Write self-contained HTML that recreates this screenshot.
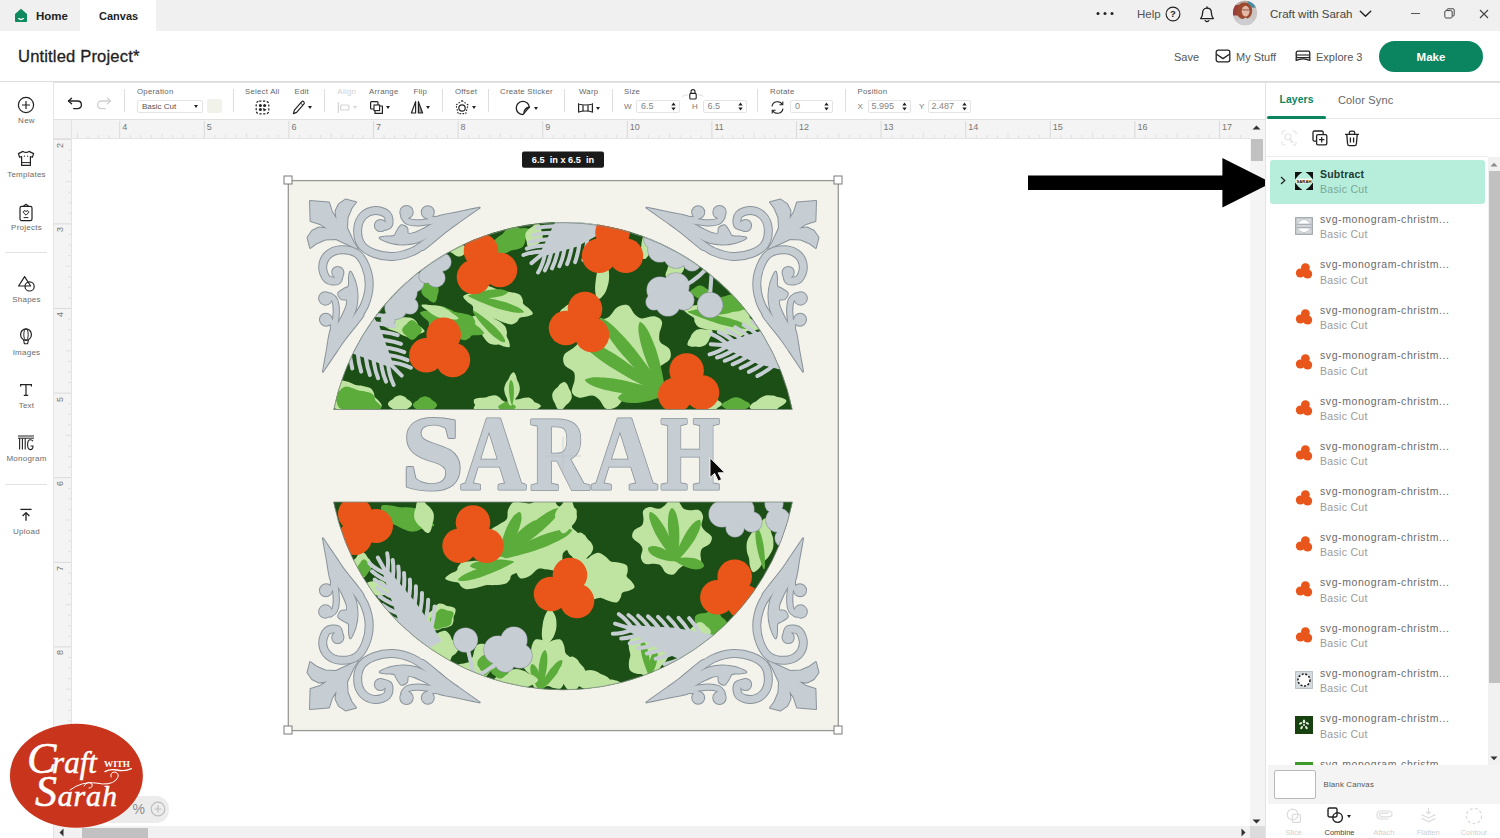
<!DOCTYPE html>
<html lang="en">
<head>
<meta charset="utf-8">
<title>Untitled Project - Canvas</title>
<style>
*{box-sizing:border-box;margin:0;padding:0}
html,body{width:1500px;height:838px;overflow:hidden;background:#fff}
body{font-family:"Liberation Sans",sans-serif;color:#333;position:relative;-webkit-font-smoothing:antialiased}
.abs{position:absolute}
.t{position:absolute;white-space:nowrap;line-height:1}
svg{position:absolute;overflow:visible}
/* top bar */
#tabbar{left:0;top:0;width:1500px;height:31px;background:#f0f0f0}
#tabcanvas{left:80px;top:0;width:76px;height:31px;background:#fff}
#header{left:0;top:31px;width:1500px;height:51px;background:#fff;border-bottom:1px solid #dcdcdc}
/* sidebar */
#side{left:0;top:82px;width:54px;height:756px;background:#fff;border-right:1px solid #e4e4e4}
.sl{position:absolute;left:0;width:53px;text-align:center;font-size:8px;color:#6b6b6b;line-height:1;letter-spacing:.25px}
/* toolbar */
#toolbar{left:54px;top:82px;width:1211px;height:38px;background:#fff;border-top:1px solid #e2e2e2;border-bottom:1px solid #e0e0e0}
.sep{position:absolute;top:89px;width:1px;height:23px;background:#dedede}
.lbl{position:absolute;top:88px;font-size:7.8px;color:#666;line-height:1;white-space:nowrap;letter-spacing:.25px}
.inp{position:absolute;top:100px;height:13px;border:1px solid #e4e4e4;border-radius:2px;background:#fff;font-size:9px;color:#858585;line-height:11px;padding-left:4px}
.spin{position:absolute;right:3px;top:1px;width:5px;height:9px}
.car{position:absolute;width:0;height:0;border-left:2.5px solid transparent;border-right:2.5px solid transparent;border-top:3.5px solid #222}
/* rulers */
#hruler{left:54px;top:120px;width:1196px;height:19px;background:#f4f4f4;border-bottom:1px solid #e3e3e3;overflow:hidden}
#vruler{left:54px;top:139px;width:18px;height:687px;background:#f4f4f4;border-right:1px solid #e3e3e3;overflow:hidden}
#corner{left:54px;top:120px;width:18px;height:19px;background:#f3f3f3;border-right:1px solid #e3e3e3;border-bottom:1px solid #e3e3e3}
.rn{position:absolute;font-size:9px;color:#777;line-height:1}
#canvas{left:72px;top:139px;width:1178px;height:687px;background:#fff;overflow:hidden}
/* scrollbars */
#vsb{left:1250px;top:120px;width:15px;height:706px;background:#f4f4f4}
#hsb{left:54px;top:826px;width:1196px;height:12px;background:#f1f1f1}
/* panel */
#panel{left:1265px;top:82px;width:235px;height:756px;background:#fff;border-left:1px solid #e3e3e3;border-top:1px solid #e2e2e2}
.ln{position:absolute;left:1320px;font-size:10.5px;color:#6a6a6a;line-height:1;white-space:nowrap;letter-spacing:.58px}
.lc{position:absolute;left:1320px;font-size:10.5px;color:#9a9a9a;line-height:1;white-space:nowrap;letter-spacing:.3px}
.bl{position:absolute;font-size:7.5px;color:#cfcfcf;line-height:1;white-space:nowrap;text-align:center;width:50px}
.lw{position:absolute;font-family:"Liberation Serif",serif;font-style:italic;color:#fff;white-space:nowrap;line-height:44px;height:44px;-webkit-text-stroke:.5px #fff}
.lw::first-letter{font-size:44px}
#lwC::first-letter{margin-right:-4.3px}
</style>
</head>
<body>
<div class="abs" id="tabbar"></div>
<div class="abs" id="tabcanvas"></div>
<svg style="left:14px;top:8px" width="14" height="15" viewBox="0 0 14 15"><path d="M7 .8 L13 6 V13.2 Q13 14 12.2 14 H1.8 Q1 14 1 13.2 V6 Z" fill="#0e8a5f"/><path d="M4.6 10.6 Q7 12.4 9.4 10.6" stroke="#fff" stroke-width="1.3" fill="none" stroke-linecap="round"/></svg>
<div class="t" id="tHome" style="left:36px;top:10.5px;font-size:11.5px;font-weight:bold;color:#222">Home</div>
<div class="t" id="tCanvas" style="left:99px;top:10.5px;font-size:11px;font-weight:bold;color:#222">Canvas</div>
<!-- right side of tab bar -->
<svg style="left:1096px;top:11px" width="18" height="5" viewBox="0 0 18 5"><circle cx="2" cy="2.5" r="1.5" fill="#222"/><circle cx="9" cy="2.5" r="1.5" fill="#222"/><circle cx="16" cy="2.5" r="1.5" fill="#222"/></svg>
<div class="t" id="tHelp" style="left:1137px;top:9px;font-size:11.5px;color:#555">Help</div>
<svg style="left:1165px;top:6px" width="16" height="16" viewBox="0 0 16 16"><circle cx="8" cy="8" r="6.9" fill="none" stroke="#222" stroke-width="1.1"/><text x="8" y="11.4" font-size="9.5" font-weight="bold" text-anchor="middle" fill="#222" font-family="Liberation Sans, sans-serif">?</text></svg>
<svg style="left:1199px;top:5.6px" width="16" height="18" viewBox="0 0 16 18"><path d="M8 2.2 C4.8 2.2 3.6 4.6 3.6 7 C3.6 10.2 2.6 11.4 1.6 12.6 H14.4 C13.4 11.4 12.4 10.2 12.4 7 C12.4 4.6 11.2 2.2 8 2.2 Z" fill="none" stroke="#222" stroke-width="1.3" stroke-linejoin="round"/><path d="M8 .8 V2.2" stroke="#222" stroke-width="1.3" stroke-linecap="round"/><path d="M6.2 14.6 Q8 16.6 9.8 14.6" fill="none" stroke="#222" stroke-width="1.3" stroke-linecap="round"/></svg>
<!-- avatar -->
<svg style="left:1231.5px;top:.3px" width="26" height="26" viewBox="0 0 26 26"><defs><clipPath id="av"><circle cx="13" cy="13" r="12.2"/></clipPath></defs><g clip-path="url(#av)"><rect width="26" height="26" fill="#cbc6c4"/><rect x="0" y="0" width="26" height="8" fill="#b7a9a4"/><rect x="1" y="5" width="6" height="10.5" fill="#9b3d3b"/><rect x="15.5" y="1" width="8" height="6.5" fill="#4a8da0"/><ellipse cx="12.3" cy="11" rx="7.9" ry="8.4" fill="#9a4a2e"/><ellipse cx="13.6" cy="11.2" rx="3.9" ry="5.4" fill="#e6b9a6"/><rect x="10.2" y="9" width="7" height="1.8" rx=".9" fill="#8a5a4c" opacity=".6"/><path d="M1 26 Q3 18.4 11 19 L13.6 17.4 L16 19 Q23 18.6 25 26 Z" fill="#cdcdd1"/></g></svg>
<div class="t" id="tCws" style="left:1270px;top:9px;font-size:11.5px;color:#444">Craft with Sarah</div>
<svg style="left:1359px;top:10px" width="13" height="8" viewBox="0 0 13 8"><path d="M1.3 1.3 L6.5 6.3 L11.7 1.3" fill="none" stroke="#222" stroke-width="1.4" stroke-linecap="round" stroke-linejoin="round"/></svg>
<div class="abs" style="left:1411px;top:13px;width:9px;height:1px;background:#555"></div>
<svg style="left:1444px;top:8px" width="11" height="11" viewBox="0 0 11 11"><rect x=".8" y="2.6" width="7.4" height="7.4" rx="1.4" fill="none" stroke="#444" stroke-width="1"/><path d="M3 2.4 V1.8 Q3 .8 4 .8 H9.2 Q10.2 .8 10.2 1.8 V7 Q10.2 8 9.2 8 H8.4" fill="none" stroke="#444" stroke-width="1"/></svg>
<svg style="left:1479px;top:9px" width="10" height="10" viewBox="0 0 10 10"><path d="M1 1 L9 9 M9 1 L1 9" stroke="#444" stroke-width="1.1"/></svg>
<!-- header -->
<div class="abs" id="header"></div>
<div class="t" id="tTitle" style="left:18px;top:48.5px;font-size:16.6px;color:#222;letter-spacing:.15px;-webkit-text-stroke:.3px #222">Untitled Project*</div>
<div class="t" id="tSave" style="margin-top:1px;left:1174px;top:51px;font-size:11px;color:#555">Save</div>
<svg style="left:1215px;top:49px" width="16" height="14" viewBox="0 0 16 14"><rect x="1.2" y="1.2" width="13.6" height="11.6" rx="2" fill="none" stroke="#222" stroke-width="1.3"/><path d="M1.6 5.2 L8 9.6 L14.4 5.2" fill="none" stroke="#222" stroke-width="1.3" stroke-linejoin="round"/></svg>
<div class="t" id="tMy" style="margin-top:1px;left:1236px;top:51px;font-size:11px;color:#555">My Stuff</div>
<svg style="left:1295px;top:50px" width="16" height="12" viewBox="0 0 16 12"><rect x="1.2" y="1.2" width="13.6" height="6.4" rx="1.6" fill="none" stroke="#222" stroke-width="1.3"/><path d="M1.4 5 H14.6" stroke="#222" stroke-width="1.1"/><path d="M1.2 7 V10.4 Q8 7.2 14.8 10.4 V7" fill="none" stroke="#222" stroke-width="1.3" stroke-linejoin="round"/></svg>
<div class="t" id="tExp" style="margin-top:1px;left:1316px;top:51px;font-size:11px;color:#555">Explore 3</div>
<div class="abs" style="left:1379px;top:41px;width:104px;height:31px;border-radius:16px;background:#0b8560"></div>
<div class="t" id="tMake" style="left:1379px;top:51.5px;width:104px;text-align:center;font-size:11.5px;font-weight:bold;color:#fff">Make</div>
<div class="abs" id="side"></div>
<!-- New -->
<svg style="left:17px;top:96px" width="18" height="18" viewBox="0 0 18 18"><circle cx="9" cy="9" r="7.6" fill="none" stroke="#222" stroke-width="1.2"/><path d="M9 5 V13 M5 9 H13" stroke="#222" stroke-width="1.2"/></svg>
<div class="sl" style="top:116.5px">New</div>
<!-- Templates -->
<svg style="left:17px;top:150px" width="18" height="17" viewBox="0 0 18 17"><path d="M6 1.4 Q9 3.4 12 1.4 L16.6 3.6 L15.4 7.2 L13.4 6.6 V15.4 H4.6 V6.6 L2.6 7.2 L1.4 3.6 Z" fill="none" stroke="#222" stroke-width="1.2" stroke-linejoin="round"/><path d="M4.6 12.6 H13.4" stroke="#222" stroke-width="1"/><circle cx="7.4" cy="6.2" r=".6" fill="#222"/><circle cx="10.6" cy="6.2" r=".6" fill="#222"/></svg>
<div class="sl" style="top:170.5px">Templates</div>
<!-- Projects -->
<svg style="left:18px;top:203px" width="16" height="19" viewBox="0 0 16 19"><rect x="2" y="3.4" width="12" height="14.2" rx="1.6" fill="none" stroke="#222" stroke-width="1.2"/><path d="M5.4 3.2 L8 1.2 L10.6 3.2" fill="none" stroke="#222" stroke-width="1.1" stroke-linejoin="round"/><path d="M8 12.2 L5.6 9.8 Q4.8 8.4 6 7.8 Q7.2 7.4 8 8.6 Q8.8 7.4 10 7.8 Q11.2 8.4 10.4 9.8 Z" fill="none" stroke="#222" stroke-width="1"/><path d="M5.6 14.6 H10.4" stroke="#222" stroke-width="1"/></svg>
<div class="sl" style="top:224px">Projects</div>
<div class="abs" style="left:5px;top:252px;width:42px;height:1px;background:#e2e2e2"></div>
<!-- Shapes -->
<svg style="left:17px;top:275px" width="19" height="18" viewBox="0 0 19 18"><path d="M7.6 1.6 L13.6 11 H1.6 Z" fill="none" stroke="#222" stroke-width="1.2" stroke-linejoin="round"/><circle cx="12.6" cy="11.4" r="4.6" fill="none" stroke="#222" stroke-width="1.2"/></svg>
<div class="sl" style="top:295.5px">Shapes</div>
<!-- Images -->
<svg style="left:19px;top:328px" width="14" height="18" viewBox="0 0 14 18"><ellipse cx="7" cy="6.6" rx="5.4" ry="5.8" fill="none" stroke="#222" stroke-width="1.2"/><ellipse cx="7" cy="6.6" rx="2.2" ry="5.8" fill="none" stroke="#222" stroke-width="1"/><path d="M4.6 12 L5.4 15.8 H8.6 L9.4 12" fill="none" stroke="#222" stroke-width="1.1" stroke-linejoin="round"/></svg>
<div class="sl" style="top:348.5px">Images</div>
<!-- Text -->
<svg style="left:19px;top:383px" width="14" height="14" viewBox="0 0 14 14"><path d="M1.6 3.6 V1.6 H12.4 V3.6 M7 1.6 V12.4 M4.8 12.4 H9.2" fill="none" stroke="#222" stroke-width="1.2"/></svg>
<div class="sl" style="top:401.5px">Text</div>
<!-- Monogram -->
<svg style="left:17px;top:435px" width="18" height="16" viewBox="0 0 18 16"><path d="M1 1 H17 M1 3.2 H17" stroke="#222" stroke-width="1"/><path d="M2.6 3.2 V14.6 M5.4 3.2 V14.6 M8.2 3.2 V14.6" stroke="#222" stroke-width="1.1"/><path d="M16 6.2 Q15.2 4.8 13.4 4.8 Q10.6 4.8 10.6 9.6 Q10.6 14.6 13.4 14.6 Q16 14.6 16 11 H13.6" fill="none" stroke="#222" stroke-width="1.1"/></svg>
<div class="sl" style="top:454.5px">Monogram</div>
<div class="abs" style="left:5px;top:484px;width:42px;height:1px;background:#e2e2e2"></div>
<!-- Upload -->
<svg style="left:19px;top:508px" width="14" height="14" viewBox="0 0 14 14"><path d="M1.4 1.4 H12.6" stroke="#222" stroke-width="1.3"/><path d="M7 12.8 V5 M3.6 8 L7 4.6 L10.4 8" fill="none" stroke="#222" stroke-width="1.3" stroke-linejoin="round"/></svg>
<div class="sl" style="top:527.5px">Upload</div>
<div class="abs" id="toolbar"></div>
<!-- undo / redo -->
<svg style="left:67px;top:96.8px" width="16" height="13" viewBox="0 0 16 13"><path d="M4.6 1.2 L1.4 4 L4.6 6.8" fill="none" stroke="#222" stroke-width="1.3" stroke-linecap="round" stroke-linejoin="round"/><path d="M1.8 4 H10.4 Q14.4 4 14.4 7.8 Q14.4 11.6 10.4 11.6 H6.6" fill="none" stroke="#222" stroke-width="1.3" stroke-linecap="round"/></svg>
<svg style="left:96px;top:96.8px" width="16" height="13" viewBox="0 0 16 13"><path d="M11.4 1.2 L14.6 4 L11.4 6.8" fill="none" stroke="#d0d0d0" stroke-width="1.3" stroke-linecap="round" stroke-linejoin="round"/><path d="M14.2 4 H5.6 Q1.6 4 1.6 7.8 Q1.6 11.6 5.6 11.6 H9.4" fill="none" stroke="#d0d0d0" stroke-width="1.3" stroke-linecap="round"/></svg>
<div class="sep" style="left:124px"></div>
<div class="lbl" style="left:137px">Operation</div>
<div class="inp" style="left:137px;width:66px;color:#555;font-size:8px">Basic Cut<div class="car" style="right:4px;top:3.5px"></div></div>
<div class="abs" style="left:207px;top:99px;width:15px;height:14px;border-radius:2px;background:#f1f2e9"></div>
<div class="sep" style="left:233px"></div>
<div class="lbl" style="left:245px">Select All</div>
<svg style="left:255px;top:99.8px" width="15" height="15" viewBox="0 0 15 15"><rect x="1.2" y="1.2" width="12.6" height="12.6" rx="3" fill="none" stroke="#222" stroke-width="1.2" stroke-dasharray="2.2 1.6"/><circle cx="5.4" cy="5.6" r="1.5" fill="#222"/><circle cx="9.6" cy="5.6" r="1.5" fill="#222"/><circle cx="5.4" cy="9.6" r="1.5" fill="#222"/><path d="M7.8 8 L11.6 9.6 L8.8 11.6 Z" fill="#222"/></svg>
<div class="lbl" style="left:294.5px">Edit</div>
<svg style="left:292px;top:99.8px" width="14" height="15" viewBox="0 0 14 15"><path d="M9.8 1.6 Q10.8 .8 11.8 1.8 Q12.8 2.8 12 3.8 L4.6 12.4 L1.4 13.6 L2.4 10.2 Z" fill="none" stroke="#222" stroke-width="1.2" stroke-linejoin="round"/><path d="M8.6 3 L10.8 5.2" stroke="#222" stroke-width="1"/></svg>
<div class="car" style="left:308px;top:105.8px"></div>
<div class="sep" style="left:324px"></div>
<div class="lbl" style="left:337.5px;color:#cfcfcf">Align</div>
<svg style="left:337px;top:100.8px" width="14" height="13" viewBox="0 0 14 13"><path d="M1.4 1 V12" stroke="#d4d4d4" stroke-width="1.2"/><rect x="3.6" y="4" width="8.4" height="5" rx="1" fill="none" stroke="#d4d4d4" stroke-width="1.2"/></svg>
<div class="car" style="left:353px;top:105.8px;border-top-color:#d4d4d4"></div>
<div class="lbl" style="left:369px">Arrange</div>
<svg style="left:369px;top:99.8px" width="15" height="15" viewBox="0 0 15 15"><rect x="1.6" y="1.6" width="7.4" height="7.4" rx="1" fill="#fff" stroke="#222" stroke-width="1.2"/><path d="M11 6 H13.4 V13.4 H6 V11" fill="none" stroke="#222" stroke-width="1.2" stroke-linejoin="round"/><rect x="5" y="5" width="5.6" height="5.6" fill="#fff" stroke="#222" stroke-width="1.1"/></svg>
<div class="car" style="left:386px;top:105.8px"></div>
<div class="lbl" style="left:413.5px">Flip</div>
<svg style="left:410px;top:99.8px" width="14" height="15" viewBox="0 0 14 15"><path d="M5.6 1.6 V13 H1.4 Z" fill="none" stroke="#222" stroke-width="1.2" stroke-linejoin="round"/><path d="M8.4 1.6 V13 H12.6 Z" fill="#9a9a9a" stroke="#222" stroke-width="1.2" stroke-linejoin="round"/></svg>
<div class="car" style="left:426px;top:105.8px"></div>
<div class="sep" style="left:442px"></div>
<div class="lbl" style="left:455px">Offset</div>
<svg style="left:454px;top:98.8px" width="16" height="17" viewBox="0 0 16 17"><circle cx="8" cy="9" r="3.2" fill="none" stroke="#222" stroke-width="1.2"/><path d="M8 1.6 L14 6 L11.8 14.6 H4.2 L2 6 Z" fill="none" stroke="#222" stroke-width="1.1" stroke-dasharray="1.6 1.4" stroke-linejoin="round"/></svg>
<div class="car" style="left:472px;top:105.8px"></div>
<div class="sep" style="left:488px"></div>
<div class="lbl" style="left:500px">Create Sticker</div>
<svg style="left:515px;top:99.8px" width="16" height="16" viewBox="0 0 16 16"><path d="M14.4 7 A6.6 6.6 0 1 0 7.4 14.6 Q8.4 14.4 9 13.4 Q8.6 8.6 14.4 7 Z" fill="none" stroke="#222" stroke-width="1.3" stroke-linejoin="round"/><path d="M14.4 7 L9 13.4" stroke="#222" stroke-width="1.2"/></svg>
<div class="car" style="left:534px;top:106.5px"></div>
<div class="sep" style="left:564px"></div>
<div class="lbl" style="left:579px">Warp</div>
<svg style="left:577px;top:101.8px" width="17" height="12" viewBox="0 0 17 12"><path d="M1 1.8 Q8.5 4.2 16 1.8 M1 10.2 Q8.5 7.8 16 10.2 M1.6 1.2 V10.8 M15.4 1.2 V10.8 M6 2.8 V9.2 M11 2.8 V9.2" fill="none" stroke="#222" stroke-width="1.2"/></svg>
<div class="car" style="left:596px;top:106.5px"></div>
<div class="sep" style="left:612px"></div>
<div class="lbl" style="left:624px">Size</div>
<div class="lbl" style="left:624px;top:102.6px;font-size:8px;color:#777">W</div>
<div class="inp" style="left:636px;width:44px">6.5<svg class="spin" viewBox="0 0 5 9"><path d="M.3 3.6 L2.5 .6 L4.7 3.6 Z M.3 5.4 L2.5 8.4 L4.7 5.4 Z" fill="#222"/></svg></div>
<svg style="left:682px;top:88px" width="22" height="13" viewBox="0 0 22 13"><path d="M1 9 Q1 7 3.4 7 H6 M21 9 Q21 7 18.6 7 H16" fill="none" stroke="#ddd" stroke-width="1"/><rect x="7.8" y="5.4" width="6.4" height="5.6" rx="1" fill="#fff" stroke="#222" stroke-width="1.1"/><path d="M9 5.2 V3.6 Q9 1.6 11 1.6 Q13 1.6 13 3.6 V5.2" fill="none" stroke="#222" stroke-width="1.1"/></svg>
<div class="lbl" style="left:692px;top:102.6px;font-size:8px;color:#777">H</div>
<div class="inp" style="left:702.5px;width:44px">6.5<svg class="spin" viewBox="0 0 5 9"><path d="M.3 3.6 L2.5 .6 L4.7 3.6 Z M.3 5.4 L2.5 8.4 L4.7 5.4 Z" fill="#222"/></svg></div>
<div class="sep" style="left:757px"></div>
<div class="lbl" style="left:770px">Rotate</div>
<svg style="left:770px;top:99.8px" width="15" height="15" viewBox="0 0 15 15"><path d="M2 6.4 A5.6 5.6 0 0 1 12.4 4.6 M13 8.6 A5.6 5.6 0 0 1 2.6 10.4" fill="none" stroke="#222" stroke-width="1.1"/><path d="M12.8 1.4 V4.8 H9.4 M2.2 13.6 V10.2 H5.6" fill="none" stroke="#222" stroke-width="1.1" stroke-linejoin="round"/></svg>
<div class="inp" style="left:790px;width:43px">0<svg class="spin" viewBox="0 0 5 9"><path d="M.3 3.6 L2.5 .6 L4.7 3.6 Z M.3 5.4 L2.5 8.4 L4.7 5.4 Z" fill="#222"/></svg></div>
<div class="sep" style="left:845px"></div>
<div class="lbl" style="left:857.5px">Position</div>
<div class="lbl" style="left:857.5px;top:102.6px;font-size:8px;color:#777">X</div>
<div class="inp" style="left:867.5px;width:43px;padding-left:3px">5.995<svg class="spin" viewBox="0 0 5 9"><path d="M.3 3.6 L2.5 .6 L4.7 3.6 Z M.3 5.4 L2.5 8.4 L4.7 5.4 Z" fill="#222"/></svg></div>
<div class="lbl" style="left:919px;top:102.6px;font-size:8px;color:#777">Y</div>
<div class="inp" style="left:927.5px;width:43.5px;padding-left:3px">2.487<svg class="spin" viewBox="0 0 5 9"><path d="M.3 3.6 L2.5 .6 L4.7 3.6 Z M.3 5.4 L2.5 8.4 L4.7 5.4 Z" fill="#222"/></svg></div>
<div class="abs" id="hruler">
<svg style="left:0;top:1px" width="1196" height="18"><rect x="22.9" y="12" width="1" height="6" fill="#e2e2e2"/><rect x="33.5" y="14" width="1" height="4" fill="#e2e2e2"/><rect x="44.0" y="14" width="1" height="4" fill="#e2e2e2"/><rect x="54.6" y="14" width="1" height="4" fill="#e2e2e2"/><rect x="65.2" y="0" width="1" height="18" fill="#dadada"/><rect x="75.8" y="14" width="1" height="4" fill="#e2e2e2"/><rect x="86.3" y="14" width="1" height="4" fill="#e2e2e2"/><rect x="96.9" y="14" width="1" height="4" fill="#e2e2e2"/><rect x="107.5" y="12" width="1" height="6" fill="#e2e2e2"/><rect x="118.1" y="14" width="1" height="4" fill="#e2e2e2"/><rect x="128.6" y="14" width="1" height="4" fill="#e2e2e2"/><rect x="139.2" y="14" width="1" height="4" fill="#e2e2e2"/><rect x="149.8" y="0" width="1" height="18" fill="#dadada"/><rect x="160.4" y="14" width="1" height="4" fill="#e2e2e2"/><rect x="171.0" y="14" width="1" height="4" fill="#e2e2e2"/><rect x="181.5" y="14" width="1" height="4" fill="#e2e2e2"/><rect x="192.1" y="12" width="1" height="6" fill="#e2e2e2"/><rect x="202.7" y="14" width="1" height="4" fill="#e2e2e2"/><rect x="213.2" y="14" width="1" height="4" fill="#e2e2e2"/><rect x="223.8" y="14" width="1" height="4" fill="#e2e2e2"/><rect x="234.4" y="0" width="1" height="18" fill="#dadada"/><rect x="245.0" y="14" width="1" height="4" fill="#e2e2e2"/><rect x="255.5" y="14" width="1" height="4" fill="#e2e2e2"/><rect x="266.1" y="14" width="1" height="4" fill="#e2e2e2"/><rect x="276.7" y="12" width="1" height="6" fill="#e2e2e2"/><rect x="287.3" y="14" width="1" height="4" fill="#e2e2e2"/><rect x="297.8" y="14" width="1" height="4" fill="#e2e2e2"/><rect x="308.4" y="14" width="1" height="4" fill="#e2e2e2"/><rect x="319.0" y="0" width="1" height="18" fill="#dadada"/><rect x="329.6" y="14" width="1" height="4" fill="#e2e2e2"/><rect x="340.1" y="14" width="1" height="4" fill="#e2e2e2"/><rect x="350.7" y="14" width="1" height="4" fill="#e2e2e2"/><rect x="361.3" y="12" width="1" height="6" fill="#e2e2e2"/><rect x="371.9" y="14" width="1" height="4" fill="#e2e2e2"/><rect x="382.4" y="14" width="1" height="4" fill="#e2e2e2"/><rect x="393.0" y="14" width="1" height="4" fill="#e2e2e2"/><rect x="403.6" y="0" width="1" height="18" fill="#dadada"/><rect x="414.2" y="14" width="1" height="4" fill="#e2e2e2"/><rect x="424.7" y="14" width="1" height="4" fill="#e2e2e2"/><rect x="435.3" y="14" width="1" height="4" fill="#e2e2e2"/><rect x="445.9" y="12" width="1" height="6" fill="#e2e2e2"/><rect x="456.5" y="14" width="1" height="4" fill="#e2e2e2"/><rect x="467.0" y="14" width="1" height="4" fill="#e2e2e2"/><rect x="477.6" y="14" width="1" height="4" fill="#e2e2e2"/><rect x="488.2" y="0" width="1" height="18" fill="#dadada"/><rect x="498.8" y="14" width="1" height="4" fill="#e2e2e2"/><rect x="509.4" y="14" width="1" height="4" fill="#e2e2e2"/><rect x="519.9" y="14" width="1" height="4" fill="#e2e2e2"/><rect x="530.5" y="12" width="1" height="6" fill="#e2e2e2"/><rect x="541.1" y="14" width="1" height="4" fill="#e2e2e2"/><rect x="551.7" y="14" width="1" height="4" fill="#e2e2e2"/><rect x="562.2" y="14" width="1" height="4" fill="#e2e2e2"/><rect x="572.8" y="0" width="1" height="18" fill="#dadada"/><rect x="583.4" y="14" width="1" height="4" fill="#e2e2e2"/><rect x="593.9" y="14" width="1" height="4" fill="#e2e2e2"/><rect x="604.5" y="14" width="1" height="4" fill="#e2e2e2"/><rect x="615.1" y="12" width="1" height="6" fill="#e2e2e2"/><rect x="625.7" y="14" width="1" height="4" fill="#e2e2e2"/><rect x="636.2" y="14" width="1" height="4" fill="#e2e2e2"/><rect x="646.8" y="14" width="1" height="4" fill="#e2e2e2"/><rect x="657.4" y="0" width="1" height="18" fill="#dadada"/><rect x="668.0" y="14" width="1" height="4" fill="#e2e2e2"/><rect x="678.5" y="14" width="1" height="4" fill="#e2e2e2"/><rect x="689.1" y="14" width="1" height="4" fill="#e2e2e2"/><rect x="699.7" y="12" width="1" height="6" fill="#e2e2e2"/><rect x="710.3" y="14" width="1" height="4" fill="#e2e2e2"/><rect x="720.8" y="14" width="1" height="4" fill="#e2e2e2"/><rect x="731.4" y="14" width="1" height="4" fill="#e2e2e2"/><rect x="742.0" y="0" width="1" height="18" fill="#dadada"/><rect x="752.6" y="14" width="1" height="4" fill="#e2e2e2"/><rect x="763.1" y="14" width="1" height="4" fill="#e2e2e2"/><rect x="773.7" y="14" width="1" height="4" fill="#e2e2e2"/><rect x="784.3" y="12" width="1" height="6" fill="#e2e2e2"/><rect x="794.9" y="14" width="1" height="4" fill="#e2e2e2"/><rect x="805.5" y="14" width="1" height="4" fill="#e2e2e2"/><rect x="816.0" y="14" width="1" height="4" fill="#e2e2e2"/><rect x="826.6" y="0" width="1" height="18" fill="#dadada"/><rect x="837.2" y="14" width="1" height="4" fill="#e2e2e2"/><rect x="847.7" y="14" width="1" height="4" fill="#e2e2e2"/><rect x="858.3" y="14" width="1" height="4" fill="#e2e2e2"/><rect x="868.9" y="12" width="1" height="6" fill="#e2e2e2"/><rect x="879.5" y="14" width="1" height="4" fill="#e2e2e2"/><rect x="890.0" y="14" width="1" height="4" fill="#e2e2e2"/><rect x="900.6" y="14" width="1" height="4" fill="#e2e2e2"/><rect x="911.2" y="0" width="1" height="18" fill="#dadada"/><rect x="921.8" y="14" width="1" height="4" fill="#e2e2e2"/><rect x="932.3" y="14" width="1" height="4" fill="#e2e2e2"/><rect x="942.9" y="14" width="1" height="4" fill="#e2e2e2"/><rect x="953.5" y="12" width="1" height="6" fill="#e2e2e2"/><rect x="964.1" y="14" width="1" height="4" fill="#e2e2e2"/><rect x="974.6" y="14" width="1" height="4" fill="#e2e2e2"/><rect x="985.2" y="14" width="1" height="4" fill="#e2e2e2"/><rect x="995.8" y="0" width="1" height="18" fill="#dadada"/><rect x="1006.4" y="14" width="1" height="4" fill="#e2e2e2"/><rect x="1016.9" y="14" width="1" height="4" fill="#e2e2e2"/><rect x="1027.5" y="14" width="1" height="4" fill="#e2e2e2"/><rect x="1038.1" y="12" width="1" height="6" fill="#e2e2e2"/><rect x="1048.7" y="14" width="1" height="4" fill="#e2e2e2"/><rect x="1059.2" y="14" width="1" height="4" fill="#e2e2e2"/><rect x="1069.8" y="14" width="1" height="4" fill="#e2e2e2"/><rect x="1080.4" y="0" width="1" height="18" fill="#dadada"/><rect x="1091.0" y="14" width="1" height="4" fill="#e2e2e2"/><rect x="1101.5" y="14" width="1" height="4" fill="#e2e2e2"/><rect x="1112.1" y="14" width="1" height="4" fill="#e2e2e2"/><rect x="1122.7" y="12" width="1" height="6" fill="#e2e2e2"/><rect x="1133.3" y="14" width="1" height="4" fill="#e2e2e2"/><rect x="1143.8" y="14" width="1" height="4" fill="#e2e2e2"/><rect x="1154.4" y="14" width="1" height="4" fill="#e2e2e2"/><rect x="1165.0" y="0" width="1" height="18" fill="#dadada"/><rect x="1175.6" y="14" width="1" height="4" fill="#e2e2e2"/><rect x="1186.1" y="14" width="1" height="4" fill="#e2e2e2"/></svg>
<div class="rn" style="left:68.2px;top:2.5px">4</div>
<div class="rn" style="left:152.8px;top:2.5px">5</div>
<div class="rn" style="left:237.4px;top:2.5px">6</div>
<div class="rn" style="left:322.0px;top:2.5px">7</div>
<div class="rn" style="left:406.6px;top:2.5px">8</div>
<div class="rn" style="left:491.2px;top:2.5px">9</div>
<div class="rn" style="left:575.8px;top:2.5px">10</div>
<div class="rn" style="left:660.4px;top:2.5px">11</div>
<div class="rn" style="left:745.0px;top:2.5px">12</div>
<div class="rn" style="left:829.6px;top:2.5px">13</div>
<div class="rn" style="left:914.2px;top:2.5px">14</div>
<div class="rn" style="left:998.8px;top:2.5px">15</div>
<div class="rn" style="left:1083.4px;top:2.5px">16</div>
<div class="rn" style="left:1168.0px;top:2.5px">17</div>
</div>
<div class="abs" id="vruler">
<svg style="left:0;top:-1px" width="18" height="688"><rect x="0" y="0.8" width="18" height="1" fill="#dadada"/><rect x="14" y="11.4" width="4" height="1" fill="#e2e2e2"/><rect x="14" y="21.9" width="4" height="1" fill="#e2e2e2"/><rect x="14" y="32.5" width="4" height="1" fill="#e2e2e2"/><rect x="12" y="43.1" width="6" height="1" fill="#e2e2e2"/><rect x="14" y="53.7" width="4" height="1" fill="#e2e2e2"/><rect x="14" y="64.2" width="4" height="1" fill="#e2e2e2"/><rect x="14" y="74.8" width="4" height="1" fill="#e2e2e2"/><rect x="0" y="85.4" width="18" height="1" fill="#dadada"/><rect x="14" y="96.0" width="4" height="1" fill="#e2e2e2"/><rect x="14" y="106.5" width="4" height="1" fill="#e2e2e2"/><rect x="14" y="117.1" width="4" height="1" fill="#e2e2e2"/><rect x="12" y="127.7" width="6" height="1" fill="#e2e2e2"/><rect x="14" y="138.3" width="4" height="1" fill="#e2e2e2"/><rect x="14" y="148.8" width="4" height="1" fill="#e2e2e2"/><rect x="14" y="159.4" width="4" height="1" fill="#e2e2e2"/><rect x="0" y="170.0" width="18" height="1" fill="#dadada"/><rect x="14" y="180.6" width="4" height="1" fill="#e2e2e2"/><rect x="14" y="191.2" width="4" height="1" fill="#e2e2e2"/><rect x="14" y="201.7" width="4" height="1" fill="#e2e2e2"/><rect x="12" y="212.3" width="6" height="1" fill="#e2e2e2"/><rect x="14" y="222.9" width="4" height="1" fill="#e2e2e2"/><rect x="14" y="233.4" width="4" height="1" fill="#e2e2e2"/><rect x="14" y="244.0" width="4" height="1" fill="#e2e2e2"/><rect x="0" y="254.6" width="18" height="1" fill="#dadada"/><rect x="14" y="265.2" width="4" height="1" fill="#e2e2e2"/><rect x="14" y="275.8" width="4" height="1" fill="#e2e2e2"/><rect x="14" y="286.3" width="4" height="1" fill="#e2e2e2"/><rect x="12" y="296.9" width="6" height="1" fill="#e2e2e2"/><rect x="14" y="307.5" width="4" height="1" fill="#e2e2e2"/><rect x="14" y="318.1" width="4" height="1" fill="#e2e2e2"/><rect x="14" y="328.6" width="4" height="1" fill="#e2e2e2"/><rect x="0" y="339.2" width="18" height="1" fill="#dadada"/><rect x="14" y="349.8" width="4" height="1" fill="#e2e2e2"/><rect x="14" y="360.3" width="4" height="1" fill="#e2e2e2"/><rect x="14" y="370.9" width="4" height="1" fill="#e2e2e2"/><rect x="12" y="381.5" width="6" height="1" fill="#e2e2e2"/><rect x="14" y="392.1" width="4" height="1" fill="#e2e2e2"/><rect x="14" y="402.6" width="4" height="1" fill="#e2e2e2"/><rect x="14" y="413.2" width="4" height="1" fill="#e2e2e2"/><rect x="0" y="423.8" width="18" height="1" fill="#dadada"/><rect x="14" y="434.4" width="4" height="1" fill="#e2e2e2"/><rect x="14" y="444.9" width="4" height="1" fill="#e2e2e2"/><rect x="14" y="455.5" width="4" height="1" fill="#e2e2e2"/><rect x="12" y="466.1" width="6" height="1" fill="#e2e2e2"/><rect x="14" y="476.7" width="4" height="1" fill="#e2e2e2"/><rect x="14" y="487.2" width="4" height="1" fill="#e2e2e2"/><rect x="14" y="497.8" width="4" height="1" fill="#e2e2e2"/><rect x="0" y="508.4" width="18" height="1" fill="#dadada"/><rect x="14" y="519.0" width="4" height="1" fill="#e2e2e2"/><rect x="14" y="529.5" width="4" height="1" fill="#e2e2e2"/><rect x="14" y="540.1" width="4" height="1" fill="#e2e2e2"/><rect x="12" y="550.7" width="6" height="1" fill="#e2e2e2"/><rect x="14" y="561.3" width="4" height="1" fill="#e2e2e2"/><rect x="14" y="571.9" width="4" height="1" fill="#e2e2e2"/><rect x="14" y="582.4" width="4" height="1" fill="#e2e2e2"/><rect x="0" y="593.0" width="18" height="1" fill="#dadada"/><rect x="14" y="603.6" width="4" height="1" fill="#e2e2e2"/><rect x="14" y="614.1" width="4" height="1" fill="#e2e2e2"/><rect x="14" y="624.7" width="4" height="1" fill="#e2e2e2"/><rect x="12" y="635.3" width="6" height="1" fill="#e2e2e2"/><rect x="14" y="645.9" width="4" height="1" fill="#e2e2e2"/><rect x="14" y="656.5" width="4" height="1" fill="#e2e2e2"/><rect x="14" y="667.0" width="4" height="1" fill="#e2e2e2"/></svg>
<div class="rn" style="left:2px;top:1.8px;width:9px;height:9px;transform:rotate(-90deg);transform-origin:center;text-align:center">2</div>
<div class="rn" style="left:2px;top:86.4px;width:9px;height:9px;transform:rotate(-90deg);transform-origin:center;text-align:center">3</div>
<div class="rn" style="left:2px;top:171.0px;width:9px;height:9px;transform:rotate(-90deg);transform-origin:center;text-align:center">4</div>
<div class="rn" style="left:2px;top:255.6px;width:9px;height:9px;transform:rotate(-90deg);transform-origin:center;text-align:center">5</div>
<div class="rn" style="left:2px;top:340.2px;width:9px;height:9px;transform:rotate(-90deg);transform-origin:center;text-align:center">6</div>
<div class="rn" style="left:2px;top:424.8px;width:9px;height:9px;transform:rotate(-90deg);transform-origin:center;text-align:center">7</div>
<div class="rn" style="left:2px;top:509.4px;width:9px;height:9px;transform:rotate(-90deg);transform-origin:center;text-align:center">8</div>
</div>
<div class="abs" id="corner"></div>
<div class="abs" id="canvas"></div>
<div class="abs" id="vsb"></div>
<div class="abs" style="left:1251px;top:139px;width:12px;height:22px;background:#c1c1c1"></div>
<svg style="left:1252px;top:125px" width="9" height="5" viewBox="0 0 9 5"><path d="M.5 4.5 L4.5 .5 L8.5 4.5 Z" fill="#333"/></svg>
<svg style="left:1252px;top:819px" width="9" height="5" viewBox="0 0 9 5"><path d="M.5 .5 L4.5 4.5 L8.5 .5 Z" fill="#333"/></svg>
<div class="abs" id="hsb"></div>
<div class="abs" style="left:82px;top:828px;width:66px;height:10px;background:#c1c1c1"></div>
<svg style="left:59px;top:828px" width="5" height="9" viewBox="0 0 5 9"><path d="M4.5 .5 L.5 4.5 L4.5 8.5 Z" fill="#333"/></svg>
<svg style="left:1241px;top:828px" width="5" height="9" viewBox="0 0 5 9"><path d="M.5 .5 L4.5 4.5 L.5 8.5 Z" fill="#333"/></svg>
<div class="abs" style="left:1250px;top:826px;width:15px;height:12px;background:#dcdcdc"></div>
<svg style="left:0;top:0" width="1500" height="838" viewBox="0 0 1500 838">
<defs><clipPath id="ct"><path d="M329 409.5 H797 V215 H329 Z" /></clipPath><clipPath id="cb"><path d="M329 502 H797 V700 H329 Z"/></clipPath><clipPath id="cc"><circle cx="563" cy="456" r="234"/></clipPath>
<g id="flo"><g transform="translate(1 1)"><path d="M21.0 20.0 L40.0 21.6 L43.0 31.0 L47.5 38.0 L46.5 30.0 L50.0 23.0 L56.6 18.5 L67.0 21.2 L62.6 27.0 L58.6 36.3 L58.0 47.0 L64.5 61.0 L69.0 68.0 L61.0 64.5 L47.0 58.0 L36.3 58.6 L27.0 62.6 L21.2 67.0 L18.5 56.6 L23.0 50.0 L30.0 46.5 L38.0 47.5 L31.0 43.0 L21.6 40.0 Z" fill="#8a939a" stroke="#8a939a" stroke-width="2.0" stroke-linejoin="round"/><g><path d="M92.0 46.0 C93.2 45.6 98.5 45.6 99.5 43.5 C100.5 41.4 100.2 35.8 98.0 33.5 C95.8 31.2 90.0 29.2 86.0 29.5 C82.0 29.8 76.9 31.9 74.0 35.0 C71.1 38.1 69.0 43.2 68.7 48.0 C68.4 52.8 69.6 59.7 72.4 63.8 C75.2 67.9 80.2 70.5 85.5 72.5 C90.8 74.5 97.6 75.8 103.9 75.5 C110.2 75.2 117.5 73.2 123.6 70.5 C129.7 67.8 135.2 63.0 140.7 59.0 C146.2 55.0 153.8 48.6 156.4 46.5" fill="none" stroke="#8a939a" stroke-width="9.0" stroke-linecap="round" stroke-linejoin="round"/><path d="M85.9 44.5 a5.6 5.6 0 1 0 11.2 0 a5.6 5.6 0 1 0 -11.2 0 Z" fill="#8a939a" stroke="#8a939a" stroke-width="2.0" stroke-linejoin="round"/><path d="M189.0 27.0 C186.8 27.4 174.6 30.0 170.0 31.0 C165.4 32.0 152.8 33.9 150.0 35.2 C147.2 36.5 146.8 40.0 146.0 42.0 C145.2 44.0 144.6 49.4 143.0 52.0 C141.4 54.6 133.1 62.0 132.0 64.0 C130.9 66.0 132.7 69.2 134.0 69.0 C135.3 68.8 140.7 64.1 143.3 62.0 C145.9 59.9 153.3 53.4 156.4 51.0 C159.5 48.6 165.8 44.2 169.6 41.5 C173.4 38.8 186.7 29.5 189.0 27.8 C191.3 26.1 191.2 26.6 189.0 27.0 Z" fill="#8a939a" stroke="#8a939a" stroke-width="2.0" stroke-linejoin="round"/><path d="M111.3 31.2 a6.2 6.2 0 1 0 12.4 0 a6.2 6.2 0 1 0 -12.4 0 Z" fill="#8a939a" stroke="#8a939a" stroke-width="2.0" stroke-linejoin="round"/><path d="M115.0 36.0 C115.7 36.8 116.5 39.5 119.0 40.5 C121.5 41.5 125.2 42.0 130.0 41.8 C134.8 41.6 145.0 39.9 148.0 39.5" fill="none" stroke="#8a939a" stroke-width="7.2" stroke-linecap="round" stroke-linejoin="round"/><path d="M132.8 31.2 a6.0 6.0 0 1 0 12.0 0 a6.0 6.0 0 1 0 -12.0 0 Z" fill="#8a939a" stroke="#8a939a" stroke-width="2.0" stroke-linejoin="round"/><path d="M139.0 35.0 C139.7 35.5 141.2 37.5 143.0 38.0 C144.8 38.5 148.8 38.0 150.0 38.0" fill="none" stroke="#8a939a" stroke-width="6.5" stroke-linecap="round" stroke-linejoin="round"/><path d="M90.8 57.3 C90.0 56.3 94.9 55.8 97.0 55.5 C99.1 55.2 103.3 55.8 105.0 55.0 C106.7 54.2 106.9 51.6 108.0 50.0 C109.1 48.4 110.9 44.7 112.4 44.2 C113.9 43.8 117.0 45.8 118.0 47.0 C119.0 48.2 118.0 51.8 119.0 52.5 C120.0 53.2 122.6 52.8 125.0 52.0 C127.4 51.2 131.8 49.0 135.0 47.5 C138.2 46.0 144.3 41.3 146.0 42.0 C147.7 42.7 146.9 49.9 146.0 52.0 C145.1 54.1 142.7 54.6 140.0 56.0 C137.3 57.4 131.8 60.4 128.0 61.5 C124.2 62.6 118.9 63.4 115.0 63.5 C111.1 63.6 105.6 62.9 102.0 62.0 C98.4 61.1 91.5 58.3 90.8 57.3 Z" fill="#8a939a" stroke="#8a939a" stroke-width="2.0" stroke-linejoin="round"/></g><g transform="matrix(0.03 1 1 0 1.6 0)"><path d="M92.0 46.0 C93.2 45.6 98.5 45.6 99.5 43.5 C100.5 41.4 100.2 35.8 98.0 33.5 C95.8 31.2 90.0 29.2 86.0 29.5 C82.0 29.8 76.9 31.9 74.0 35.0 C71.1 38.1 69.0 43.2 68.7 48.0 C68.4 52.8 69.6 59.7 72.4 63.8 C75.2 67.9 80.2 70.5 85.5 72.5 C90.8 74.5 97.6 75.8 103.9 75.5 C110.2 75.2 117.5 73.2 123.6 70.5 C129.7 67.8 135.2 63.0 140.7 59.0 C146.2 55.0 153.8 48.6 156.4 46.5" fill="none" stroke="#8a939a" stroke-width="9.0" stroke-linecap="round" stroke-linejoin="round"/><path d="M85.9 44.5 a5.6 5.6 0 1 0 11.2 0 a5.6 5.6 0 1 0 -11.2 0 Z" fill="#8a939a" stroke="#8a939a" stroke-width="2.0" stroke-linejoin="round"/><path d="M189.0 27.0 C186.8 27.4 174.6 30.0 170.0 31.0 C165.4 32.0 152.8 33.9 150.0 35.2 C147.2 36.5 146.8 40.0 146.0 42.0 C145.2 44.0 144.6 49.4 143.0 52.0 C141.4 54.6 133.1 62.0 132.0 64.0 C130.9 66.0 132.7 69.2 134.0 69.0 C135.3 68.8 140.7 64.1 143.3 62.0 C145.9 59.9 153.3 53.4 156.4 51.0 C159.5 48.6 165.8 44.2 169.6 41.5 C173.4 38.8 186.7 29.5 189.0 27.8 C191.3 26.1 191.2 26.6 189.0 27.0 Z" fill="#8a939a" stroke="#8a939a" stroke-width="2.0" stroke-linejoin="round"/><path d="M111.3 31.2 a6.2 6.2 0 1 0 12.4 0 a6.2 6.2 0 1 0 -12.4 0 Z" fill="#8a939a" stroke="#8a939a" stroke-width="2.0" stroke-linejoin="round"/><path d="M115.0 36.0 C115.7 36.8 116.5 39.5 119.0 40.5 C121.5 41.5 125.2 42.0 130.0 41.8 C134.8 41.6 145.0 39.9 148.0 39.5" fill="none" stroke="#8a939a" stroke-width="7.2" stroke-linecap="round" stroke-linejoin="round"/><path d="M132.8 31.2 a6.0 6.0 0 1 0 12.0 0 a6.0 6.0 0 1 0 -12.0 0 Z" fill="#8a939a" stroke="#8a939a" stroke-width="2.0" stroke-linejoin="round"/><path d="M139.0 35.0 C139.7 35.5 141.2 37.5 143.0 38.0 C144.8 38.5 148.8 38.0 150.0 38.0" fill="none" stroke="#8a939a" stroke-width="6.5" stroke-linecap="round" stroke-linejoin="round"/><path d="M90.8 57.3 C90.0 56.3 94.9 55.8 97.0 55.5 C99.1 55.2 103.3 55.8 105.0 55.0 C106.7 54.2 106.9 51.6 108.0 50.0 C109.1 48.4 110.9 44.7 112.4 44.2 C113.9 43.8 117.0 45.8 118.0 47.0 C119.0 48.2 118.0 51.8 119.0 52.5 C120.0 53.2 122.6 52.8 125.0 52.0 C127.4 51.2 131.8 49.0 135.0 47.5 C138.2 46.0 144.3 41.3 146.0 42.0 C147.7 42.7 146.9 49.9 146.0 52.0 C145.1 54.1 142.7 54.6 140.0 56.0 C137.3 57.4 131.8 60.4 128.0 61.5 C124.2 62.6 118.9 63.4 115.0 63.5 C111.1 63.6 105.6 62.9 102.0 62.0 C98.4 61.1 91.5 58.3 90.8 57.3 Z" fill="#8a939a" stroke="#8a939a" stroke-width="2.0" stroke-linejoin="round"/></g><path d="M21.0 20.0 L40.0 21.6 L43.0 31.0 L47.5 38.0 L46.5 30.0 L50.0 23.0 L56.6 18.5 L67.0 21.2 L62.6 27.0 L58.6 36.3 L58.0 47.0 L64.5 61.0 L69.0 68.0 L61.0 64.5 L47.0 58.0 L36.3 58.6 L27.0 62.6 L21.2 67.0 L18.5 56.6 L23.0 50.0 L30.0 46.5 L38.0 47.5 L31.0 43.0 L21.6 40.0 Z" fill="#c6ced4"/><g><path d="M92.0 46.0 C93.2 45.6 98.5 45.6 99.5 43.5 C100.5 41.4 100.2 35.8 98.0 33.5 C95.8 31.2 90.0 29.2 86.0 29.5 C82.0 29.8 76.9 31.9 74.0 35.0 C71.1 38.1 69.0 43.2 68.7 48.0 C68.4 52.8 69.6 59.7 72.4 63.8 C75.2 67.9 80.2 70.5 85.5 72.5 C90.8 74.5 97.6 75.8 103.9 75.5 C110.2 75.2 117.5 73.2 123.6 70.5 C129.7 67.8 135.2 63.0 140.7 59.0 C146.2 55.0 153.8 48.6 156.4 46.5" fill="none" stroke="#c6ced4" stroke-width="7.0" stroke-linecap="round" stroke-linejoin="round"/><path d="M85.9 44.5 a5.6 5.6 0 1 0 11.2 0 a5.6 5.6 0 1 0 -11.2 0 Z" fill="#c6ced4"/><path d="M189.0 27.0 C186.8 27.4 174.6 30.0 170.0 31.0 C165.4 32.0 152.8 33.9 150.0 35.2 C147.2 36.5 146.8 40.0 146.0 42.0 C145.2 44.0 144.6 49.4 143.0 52.0 C141.4 54.6 133.1 62.0 132.0 64.0 C130.9 66.0 132.7 69.2 134.0 69.0 C135.3 68.8 140.7 64.1 143.3 62.0 C145.9 59.9 153.3 53.4 156.4 51.0 C159.5 48.6 165.8 44.2 169.6 41.5 C173.4 38.8 186.7 29.5 189.0 27.8 C191.3 26.1 191.2 26.6 189.0 27.0 Z" fill="#c6ced4"/><path d="M111.3 31.2 a6.2 6.2 0 1 0 12.4 0 a6.2 6.2 0 1 0 -12.4 0 Z" fill="#c6ced4"/><path d="M115.0 36.0 C115.7 36.8 116.5 39.5 119.0 40.5 C121.5 41.5 125.2 42.0 130.0 41.8 C134.8 41.6 145.0 39.9 148.0 39.5" fill="none" stroke="#c6ced4" stroke-width="5.2" stroke-linecap="round" stroke-linejoin="round"/><path d="M132.8 31.2 a6.0 6.0 0 1 0 12.0 0 a6.0 6.0 0 1 0 -12.0 0 Z" fill="#c6ced4"/><path d="M139.0 35.0 C139.7 35.5 141.2 37.5 143.0 38.0 C144.8 38.5 148.8 38.0 150.0 38.0" fill="none" stroke="#c6ced4" stroke-width="4.5" stroke-linecap="round" stroke-linejoin="round"/><path d="M90.8 57.3 C90.0 56.3 94.9 55.8 97.0 55.5 C99.1 55.2 103.3 55.8 105.0 55.0 C106.7 54.2 106.9 51.6 108.0 50.0 C109.1 48.4 110.9 44.7 112.4 44.2 C113.9 43.8 117.0 45.8 118.0 47.0 C119.0 48.2 118.0 51.8 119.0 52.5 C120.0 53.2 122.6 52.8 125.0 52.0 C127.4 51.2 131.8 49.0 135.0 47.5 C138.2 46.0 144.3 41.3 146.0 42.0 C147.7 42.7 146.9 49.9 146.0 52.0 C145.1 54.1 142.7 54.6 140.0 56.0 C137.3 57.4 131.8 60.4 128.0 61.5 C124.2 62.6 118.9 63.4 115.0 63.5 C111.1 63.6 105.6 62.9 102.0 62.0 C98.4 61.1 91.5 58.3 90.8 57.3 Z" fill="#c6ced4"/></g><g transform="matrix(0.03 1 1 0 1.6 0)"><path d="M92.0 46.0 C93.2 45.6 98.5 45.6 99.5 43.5 C100.5 41.4 100.2 35.8 98.0 33.5 C95.8 31.2 90.0 29.2 86.0 29.5 C82.0 29.8 76.9 31.9 74.0 35.0 C71.1 38.1 69.0 43.2 68.7 48.0 C68.4 52.8 69.6 59.7 72.4 63.8 C75.2 67.9 80.2 70.5 85.5 72.5 C90.8 74.5 97.6 75.8 103.9 75.5 C110.2 75.2 117.5 73.2 123.6 70.5 C129.7 67.8 135.2 63.0 140.7 59.0 C146.2 55.0 153.8 48.6 156.4 46.5" fill="none" stroke="#c6ced4" stroke-width="7.0" stroke-linecap="round" stroke-linejoin="round"/><path d="M85.9 44.5 a5.6 5.6 0 1 0 11.2 0 a5.6 5.6 0 1 0 -11.2 0 Z" fill="#c6ced4"/><path d="M189.0 27.0 C186.8 27.4 174.6 30.0 170.0 31.0 C165.4 32.0 152.8 33.9 150.0 35.2 C147.2 36.5 146.8 40.0 146.0 42.0 C145.2 44.0 144.6 49.4 143.0 52.0 C141.4 54.6 133.1 62.0 132.0 64.0 C130.9 66.0 132.7 69.2 134.0 69.0 C135.3 68.8 140.7 64.1 143.3 62.0 C145.9 59.9 153.3 53.4 156.4 51.0 C159.5 48.6 165.8 44.2 169.6 41.5 C173.4 38.8 186.7 29.5 189.0 27.8 C191.3 26.1 191.2 26.6 189.0 27.0 Z" fill="#c6ced4"/><path d="M111.3 31.2 a6.2 6.2 0 1 0 12.4 0 a6.2 6.2 0 1 0 -12.4 0 Z" fill="#c6ced4"/><path d="M115.0 36.0 C115.7 36.8 116.5 39.5 119.0 40.5 C121.5 41.5 125.2 42.0 130.0 41.8 C134.8 41.6 145.0 39.9 148.0 39.5" fill="none" stroke="#c6ced4" stroke-width="5.2" stroke-linecap="round" stroke-linejoin="round"/><path d="M132.8 31.2 a6.0 6.0 0 1 0 12.0 0 a6.0 6.0 0 1 0 -12.0 0 Z" fill="#c6ced4"/><path d="M139.0 35.0 C139.7 35.5 141.2 37.5 143.0 38.0 C144.8 38.5 148.8 38.0 150.0 38.0" fill="none" stroke="#c6ced4" stroke-width="4.5" stroke-linecap="round" stroke-linejoin="round"/><path d="M90.8 57.3 C90.0 56.3 94.9 55.8 97.0 55.5 C99.1 55.2 103.3 55.8 105.0 55.0 C106.7 54.2 106.9 51.6 108.0 50.0 C109.1 48.4 110.9 44.7 112.4 44.2 C113.9 43.8 117.0 45.8 118.0 47.0 C119.0 48.2 118.0 51.8 119.0 52.5 C120.0 53.2 122.6 52.8 125.0 52.0 C127.4 51.2 131.8 49.0 135.0 47.5 C138.2 46.0 144.3 41.3 146.0 42.0 C147.7 42.7 146.9 49.9 146.0 52.0 C145.1 54.1 142.7 54.6 140.0 56.0 C137.3 57.4 131.8 60.4 128.0 61.5 C124.2 62.6 118.9 63.4 115.0 63.5 C111.1 63.6 105.6 62.9 102.0 62.0 C98.4 61.1 91.5 58.3 90.8 57.3 Z" fill="#c6ced4"/></g></g></g>
</defs>
<rect x="288" y="180" width="550" height="550" fill="#f3f3ec"/>
<use href="#flo" transform="translate(288 180)"/><use href="#flo" transform="translate(838 180) scale(-1 1)"/><use href="#flo" transform="translate(288 730) scale(1 -1)"/><use href="#flo" transform="translate(838 730) scale(-1 -1)"/>
<g clip-path="url(#cc)"><g clip-path="url(#ct)"><rect x="320" y="215" width="490" height="200" fill="#1b4f15"/><path d="M529.4 229.4 C530.0 230.3 529.0 232.4 528.3 233.9 C527.7 235.4 526.1 236.8 525.6 238.2 C525.0 239.5 525.6 240.7 525.1 242.1 C524.6 243.6 524.0 245.6 522.6 246.9 C521.1 248.1 518.4 248.9 516.5 249.5 C514.6 250.1 512.9 249.9 511.1 250.6 C509.3 251.2 507.7 252.6 505.8 253.3 C503.9 254.0 501.2 255.1 499.7 254.9 C498.3 254.7 497.6 253.1 497.1 252.0 C496.5 250.9 497.1 249.3 496.5 248.4 C496.0 247.4 494.3 247.1 493.7 246.1 C493.0 245.1 491.9 243.7 492.5 242.3 C493.0 241.0 495.3 239.2 496.9 237.9 C498.5 236.6 500.5 235.8 501.9 234.6 C503.4 233.4 504.0 231.8 505.5 230.5 C507.0 229.1 509.0 227.2 510.8 226.6 C512.6 225.9 514.7 226.4 516.2 226.7 C517.7 227.0 518.4 228.1 519.9 228.3 C521.3 228.5 523.4 227.8 524.9 228.0 C526.5 228.2 528.9 228.4 529.4 229.4 Z" fill="#5cac3c"/><path d="M468.9 250.0 C468.9 250.8 468.0 251.7 467.3 252.3 C466.6 252.9 465.5 253.3 464.7 253.8 C463.9 254.4 463.4 255.1 462.4 255.5 C461.5 256.0 460.1 256.6 459.0 256.6 C457.9 256.6 456.5 256.0 455.6 255.5 C454.6 255.1 454.1 254.4 453.3 253.8 C452.5 253.3 451.4 252.9 450.7 252.3 C450.0 251.7 449.1 250.8 449.1 250.0 C449.1 249.2 450.0 248.3 450.7 247.7 C451.4 247.1 452.5 246.7 453.3 246.2 C454.1 245.6 454.6 244.9 455.6 244.5 C456.5 244.0 457.9 243.4 459.0 243.4 C460.1 243.4 461.5 244.0 462.4 244.5 C463.4 244.9 463.9 245.6 464.7 246.2 C465.5 246.7 466.6 247.1 467.3 247.7 C468.0 248.3 468.9 249.2 468.9 250.0 Z" fill="#bfe4a1"/><path d="M542.3 239.0 C541.7 240.4 540.4 241.9 539.4 242.8 C538.4 243.8 537.2 244.1 536.2 244.9 C535.1 245.7 534.2 246.9 533.1 247.5 C532.0 248.0 530.4 248.8 529.5 248.4 C528.5 248.1 527.8 246.5 527.3 245.4 C526.9 244.2 526.9 242.7 526.6 241.4 C526.3 240.2 525.6 239.2 525.5 237.8 C525.3 236.4 525.2 234.4 525.7 233.0 C526.3 231.6 527.6 230.1 528.6 229.2 C529.6 228.2 530.8 227.9 531.8 227.1 C532.9 226.3 533.8 225.1 534.9 224.5 C536.0 224.0 537.6 223.2 538.5 223.6 C539.5 223.9 540.2 225.5 540.7 226.6 C541.1 227.8 541.1 229.3 541.4 230.6 C541.7 231.8 542.4 232.8 542.5 234.2 C542.7 235.6 542.8 237.6 542.3 239.0 Z" fill="#bfe4a1"/><path d="M532.8 313.7 C532.4 315.0 529.1 315.8 527.0 316.5 C524.9 317.2 521.6 316.9 520.0 317.7 C518.3 318.6 518.6 320.3 517.2 321.5 C515.8 322.6 514.1 324.3 511.6 324.4 C509.1 324.5 505.1 323.0 502.3 322.0 C499.5 321.0 497.3 319.3 494.6 318.7 C491.9 318.0 489.2 318.5 486.2 318.0 C483.3 317.5 479.0 317.0 476.9 315.7 C474.7 314.5 474.0 312.1 473.3 310.5 C472.6 308.9 473.7 307.4 472.6 305.9 C471.6 304.4 468.6 303.1 467.0 301.5 C465.4 299.9 462.9 297.7 463.2 296.3 C463.6 295.0 466.9 294.2 469.0 293.5 C471.1 292.8 474.4 293.1 476.0 292.3 C477.7 291.4 477.4 289.7 478.8 288.5 C480.2 287.4 481.9 285.7 484.4 285.6 C486.9 285.5 490.9 287.0 493.7 288.0 C496.5 289.0 498.7 290.7 501.4 291.3 C504.1 292.0 506.8 291.5 509.8 292.0 C512.7 292.5 517.0 293.0 519.1 294.3 C521.3 295.5 522.0 297.9 522.7 299.5 C523.4 301.1 522.3 302.6 523.4 304.1 C524.4 305.6 527.4 306.9 529.0 308.5 C530.6 310.1 533.1 312.3 532.8 313.7 Z" fill="#bfe4a1"/><path d="M469.7 297.0 C472.0 298.3 480.4 301.9 485.3 303.9 C490.2 305.8 497.6 308.4 502.3 309.8 C507.1 311.1 513.5 312.4 516.7 312.8 C520.0 313.1 523.8 312.8 524.0 312.0 C524.2 311.2 521.2 308.9 518.3 307.4 C515.4 305.9 509.3 303.5 504.6 302.1 C499.9 300.6 492.3 298.8 487.1 297.7 C482.0 296.7 472.9 295.2 470.3 295.0 C467.7 294.9 467.5 295.6 469.7 297.0 Z" fill="#5cac3c"/><path d="M470.1 297.0 C471.9 297.4 478.2 297.9 481.7 298.0 C485.3 298.1 490.7 297.9 494.0 297.5 C497.3 297.1 501.6 296.1 503.7 295.3 C505.8 294.4 508.1 292.8 508.0 292.0 C507.9 291.2 505.4 290.1 503.1 289.7 C500.9 289.3 496.5 289.3 493.1 289.5 C489.8 289.8 484.6 290.8 481.1 291.6 C477.6 292.4 471.5 294.2 469.9 295.0 C468.3 295.8 468.3 296.5 470.1 297.0 Z" fill="#5cac3c"/><path d="M509.5 346.9 C508.7 347.7 506.2 347.0 504.4 346.6 C502.6 346.2 500.5 344.8 498.8 344.5 C497.2 344.2 496.2 345.0 494.5 344.8 C492.8 344.5 490.5 344.3 488.6 343.0 C486.7 341.6 484.8 338.9 483.4 336.9 C481.9 335.0 481.5 333.1 480.1 331.3 C478.7 329.5 476.6 327.9 475.1 326.0 C473.6 324.1 471.3 321.4 471.0 319.7 C470.6 318.1 472.0 317.0 472.9 316.3 C473.8 315.5 475.7 315.8 476.4 314.9 C477.2 314.1 476.9 312.3 477.6 311.4 C478.4 310.4 479.4 309.0 481.0 309.3 C482.7 309.6 485.5 311.8 487.5 313.2 C489.4 314.7 491.0 316.7 492.9 318.0 C494.8 319.3 496.6 319.7 498.6 321.1 C500.6 322.4 503.5 324.3 504.9 326.1 C506.2 327.9 506.6 330.3 506.9 332.0 C507.2 333.7 506.4 334.7 506.7 336.3 C507.1 337.9 508.6 340.0 509.1 341.7 C509.6 343.5 510.3 346.1 509.5 346.9 Z" fill="#bfe4a1"/><path d="M473.3 312.7 C474.3 314.5 478.5 320.2 481.1 323.3 C483.6 326.4 487.7 330.9 490.4 333.5 C493.2 336.0 497.1 339.1 499.3 340.4 C501.5 341.7 504.4 342.6 505.0 342.0 C505.6 341.4 504.6 338.5 503.2 336.4 C501.9 334.2 498.7 330.4 496.0 327.7 C493.3 325.1 488.7 321.2 485.5 318.7 C482.3 316.2 476.5 312.2 474.7 311.3 C472.9 310.4 472.3 310.9 473.3 312.7 Z" fill="#5cac3c"/><path d="M484.0 333.4 C483.6 334.4 480.5 334.8 478.5 335.2 C476.5 335.5 473.5 335.0 472.0 335.5 C470.4 336.0 470.7 337.5 469.3 338.3 C468.0 339.1 466.4 340.3 464.1 340.2 C461.8 340.0 458.1 338.4 455.5 337.3 C452.9 336.3 450.9 334.7 448.5 333.9 C446.0 333.1 443.5 333.2 440.7 332.5 C438.0 331.9 434.1 331.0 432.1 329.8 C430.2 328.6 429.6 326.6 429.0 325.2 C428.4 323.8 429.4 322.7 428.5 321.4 C427.6 320.1 424.8 318.7 423.4 317.2 C422.0 315.8 419.7 313.7 420.0 312.6 C420.4 311.6 423.5 311.2 425.5 310.8 C427.5 310.5 430.5 311.0 432.0 310.5 C433.6 310.0 433.3 308.5 434.7 307.7 C436.0 306.9 437.6 305.7 439.9 305.8 C442.2 306.0 445.9 307.6 448.5 308.7 C451.1 309.7 453.1 311.3 455.5 312.1 C458.0 312.9 460.5 312.8 463.3 313.5 C466.0 314.1 469.9 315.0 471.9 316.2 C473.8 317.4 474.4 319.4 475.0 320.8 C475.6 322.2 474.6 323.3 475.5 324.6 C476.4 325.9 479.2 327.3 480.6 328.8 C482.0 330.2 484.3 332.3 484.0 333.4 Z" fill="#5cac3c"/><path d="M458.6 318.8 C458.4 319.4 456.5 319.5 455.0 319.5 C453.5 319.5 451.4 319.0 449.7 318.9 C448.0 318.8 446.8 319.0 444.9 318.7 C443.0 318.4 440.3 318.0 438.1 317.2 C436.0 316.4 433.6 315.0 431.9 314.0 C430.3 313.0 429.5 312.1 428.1 311.1 C426.8 310.1 424.8 309.1 423.7 308.1 C422.6 307.1 421.2 305.8 421.4 305.2 C421.6 304.6 423.5 304.5 425.0 304.5 C426.5 304.5 428.6 305.0 430.3 305.1 C432.0 305.2 433.2 305.0 435.1 305.3 C437.0 305.6 439.7 306.0 441.9 306.8 C444.0 307.6 446.4 309.0 448.1 310.0 C449.7 311.0 450.5 311.9 451.9 312.9 C453.2 313.9 455.2 314.9 456.3 315.9 C457.4 316.9 458.8 318.2 458.6 318.8 Z" fill="#bfe4a1"/><path d="M424.6 331.5 C424.3 332.4 422.2 332.9 420.7 333.4 C419.3 333.8 417.2 333.6 415.9 334.0 C414.6 334.4 414.2 335.4 412.9 335.9 C411.6 336.4 409.7 337.2 407.9 337.0 C406.0 336.8 403.5 335.5 401.7 334.7 C399.9 333.9 398.8 332.7 397.1 331.9 C395.3 331.2 393.2 330.9 391.3 330.1 C389.5 329.4 386.8 328.3 385.8 327.3 C384.9 326.2 385.5 324.9 385.8 324.0 C386.2 323.1 387.6 322.6 387.8 321.7 C388.1 320.8 387.1 319.6 387.3 318.6 C387.4 317.7 387.6 316.2 388.9 315.8 C390.2 315.4 393.1 315.8 395.1 316.1 C397.1 316.3 399.1 317.2 401.0 317.4 C402.8 317.6 404.4 317.1 406.3 317.3 C408.3 317.5 411.1 317.7 412.8 318.4 C414.6 319.2 415.8 320.8 416.7 321.9 C417.6 323.0 417.4 324.0 418.3 325.0 C419.2 326.0 421.1 326.9 422.2 328.0 C423.2 329.1 424.8 330.6 424.6 331.5 Z" fill="#bfe4a1"/><path d="M421.9 330.0 C421.9 331.1 421.0 332.5 420.3 333.4 C419.6 334.4 418.5 334.9 417.7 335.7 C416.9 336.5 416.4 337.6 415.4 338.3 C414.5 339.0 413.1 339.9 412.0 339.9 C410.9 339.9 409.5 339.0 408.6 338.3 C407.6 337.6 407.1 336.5 406.3 335.7 C405.5 334.9 404.4 334.4 403.7 333.4 C403.0 332.5 402.1 331.1 402.1 330.0 C402.1 328.9 403.0 327.5 403.7 326.6 C404.4 325.6 405.5 325.1 406.3 324.3 C407.1 323.5 407.6 322.4 408.6 321.7 C409.5 321.0 410.9 320.1 412.0 320.1 C413.1 320.1 414.5 321.0 415.4 321.7 C416.4 322.4 416.9 323.5 417.7 324.3 C418.5 325.1 419.6 325.6 420.3 326.6 C421.0 327.5 421.9 328.9 421.9 330.0 Z" fill="#5cac3c"/><path d="M438.3 287.0 C438.8 288.4 438.7 290.4 438.5 291.8 C438.4 293.2 437.7 294.2 437.4 295.4 C437.1 296.7 437.1 298.2 436.7 299.4 C436.2 300.5 435.5 302.1 434.5 302.4 C433.6 302.8 432.0 302.0 430.9 301.5 C429.8 300.9 428.9 299.7 427.8 298.9 C426.8 298.1 425.6 297.8 424.6 296.8 C423.6 295.9 422.3 294.4 421.7 293.0 C421.2 291.6 421.3 289.6 421.5 288.2 C421.6 286.8 422.3 285.8 422.6 284.6 C422.9 283.3 422.9 281.8 423.3 280.6 C423.8 279.5 424.5 277.9 425.5 277.6 C426.4 277.2 428.0 278.0 429.1 278.5 C430.2 279.1 431.1 280.3 432.2 281.1 C433.2 281.9 434.4 282.2 435.4 283.2 C436.4 284.1 437.7 285.6 438.3 287.0 Z" fill="#5cac3c"/><path d="M381.8 406.0 C381.4 407.2 378.9 408.1 377.1 408.8 C375.4 409.4 372.8 409.4 371.3 410.2 C369.9 410.9 369.7 412.4 368.4 413.4 C367.0 414.3 365.4 415.7 363.2 415.8 C361.0 415.9 357.7 414.7 355.2 413.9 C352.8 413.1 350.8 411.7 348.5 411.0 C346.2 410.4 343.8 410.7 341.2 410.1 C338.7 409.6 335.3 409.0 333.4 407.8 C331.6 406.7 330.8 404.6 330.1 403.1 C329.4 401.6 330.0 400.3 329.2 398.9 C328.3 397.5 326.0 396.2 324.9 394.8 C323.7 393.3 321.9 391.3 322.2 390.0 C322.6 388.8 325.1 387.9 326.9 387.2 C328.6 386.6 331.2 386.6 332.7 385.8 C334.1 385.1 334.3 383.6 335.6 382.6 C337.0 381.7 338.6 380.3 340.8 380.2 C343.0 380.1 346.3 381.3 348.8 382.1 C351.2 382.9 353.2 384.3 355.5 385.0 C357.8 385.6 360.2 385.3 362.8 385.9 C365.3 386.4 368.7 387.0 370.6 388.2 C372.4 389.3 373.2 391.4 373.9 392.9 C374.6 394.4 374.0 395.7 374.8 397.1 C375.7 398.5 378.0 399.8 379.1 401.2 C380.3 402.7 382.1 404.7 381.8 406.0 Z" fill="#bfe4a1"/><path d="M381.5 407.8 C381.2 408.8 379.1 409.5 377.6 410.0 C376.1 410.5 373.9 410.5 372.7 411.1 C371.4 411.7 371.3 412.9 370.2 413.6 C369.0 414.3 367.7 415.4 365.8 415.5 C363.9 415.5 361.1 414.5 359.0 413.8 C356.9 413.1 355.2 412.0 353.2 411.4 C351.2 410.9 349.2 411.1 347.0 410.6 C344.8 410.1 341.9 409.6 340.3 408.6 C338.7 407.7 338.0 406.0 337.4 404.8 C336.8 403.6 337.3 402.5 336.5 401.4 C335.8 400.2 333.8 399.2 332.8 398.0 C331.8 396.8 330.2 395.2 330.5 394.2 C330.8 393.2 332.9 392.5 334.4 392.0 C335.9 391.5 338.1 391.5 339.3 390.9 C340.6 390.3 340.7 389.1 341.8 388.4 C343.0 387.7 344.3 386.6 346.2 386.5 C348.1 386.5 350.9 387.5 353.0 388.2 C355.1 388.9 356.8 390.0 358.8 390.6 C360.8 391.1 362.8 390.9 365.0 391.4 C367.2 391.9 370.1 392.4 371.7 393.4 C373.3 394.3 374.0 396.0 374.6 397.2 C375.2 398.4 374.7 399.5 375.5 400.6 C376.2 401.8 378.2 402.8 379.2 404.0 C380.2 405.2 381.8 406.8 381.5 407.8 Z" fill="#5cac3c"/><path d="M412.1 404.0 C412.1 405.0 411.0 406.2 410.2 407.1 C409.3 407.9 408.0 408.4 407.0 409.1 C406.0 409.8 405.4 410.8 404.2 411.4 C403.0 412.0 401.4 412.8 400.0 412.8 C398.6 412.8 397.0 412.0 395.8 411.4 C394.6 410.8 394.0 409.8 393.0 409.1 C392.0 408.4 390.7 407.9 389.8 407.1 C389.0 406.2 387.9 405.0 387.9 404.0 C387.9 403.0 389.0 401.8 389.8 400.9 C390.7 400.1 392.0 399.6 393.0 398.9 C394.0 398.2 394.6 397.2 395.8 396.6 C397.0 396.0 398.6 395.2 400.0 395.2 C401.4 395.2 403.0 396.0 404.2 396.6 C405.4 397.2 406.0 398.2 407.0 398.9 C408.0 399.6 409.3 400.1 410.2 400.9 C411.0 401.8 412.1 403.0 412.1 404.0 Z" fill="#bfe4a1"/><path d="M437.1 405.0 C437.1 406.0 436.0 407.2 435.2 408.1 C434.3 408.9 433.0 409.4 432.0 410.1 C431.0 410.8 430.4 411.8 429.2 412.4 C428.0 413.0 426.4 413.8 425.0 413.8 C423.6 413.8 422.0 413.0 420.8 412.4 C419.6 411.8 419.0 410.8 418.0 410.1 C417.0 409.4 415.7 408.9 414.8 408.1 C414.0 407.2 412.9 406.0 412.9 405.0 C412.9 404.0 414.0 402.8 414.8 401.9 C415.7 401.1 417.0 400.6 418.0 399.9 C419.0 399.2 419.6 398.2 420.8 397.6 C422.0 397.0 423.6 396.2 425.0 396.2 C426.4 396.2 428.0 397.0 429.2 397.6 C430.4 398.2 431.0 399.2 432.0 399.9 C433.0 400.6 434.3 401.1 435.2 401.9 C436.0 402.8 437.1 404.0 437.1 405.0 Z" fill="#5cac3c"/><path d="M509.0 405.0 C509.0 405.9 507.3 407.0 506.2 407.8 C505.0 408.6 503.1 408.9 502.1 409.7 C501.1 410.4 501.0 411.5 500.0 412.3 C499.0 413.1 497.5 414.3 495.9 414.6 C494.2 414.9 491.8 414.3 490.0 414.0 C488.2 413.7 487.0 412.8 485.4 412.5 C483.7 412.2 481.8 412.5 480.0 412.3 C478.2 412.0 475.6 411.7 474.6 410.9 C473.6 410.2 473.8 408.8 473.8 407.8 C473.9 406.8 475.0 405.9 475.0 405.0 C475.0 404.1 473.9 403.2 473.8 402.2 C473.8 401.2 473.6 399.8 474.6 399.1 C475.6 398.3 478.2 398.0 480.0 397.7 C481.8 397.5 483.7 397.8 485.4 397.5 C487.0 397.2 488.2 396.3 490.0 396.0 C491.8 395.7 494.2 395.1 495.9 395.4 C497.5 395.7 499.0 396.9 500.0 397.7 C501.0 398.5 501.1 399.6 502.1 400.3 C503.1 401.1 505.0 401.4 506.2 402.2 C507.3 403.0 509.0 404.1 509.0 405.0 Z" fill="#bfe4a1"/><path d="M540.9 406.0 C540.9 406.8 539.3 407.8 538.2 408.5 C537.1 409.2 535.4 409.5 534.4 410.1 C533.4 410.8 533.4 411.7 532.4 412.5 C531.4 413.2 530.1 414.3 528.5 414.5 C527.0 414.8 524.6 414.3 523.0 414.0 C521.4 413.7 520.2 413.0 518.6 412.7 C517.1 412.4 515.3 412.7 513.6 412.5 C511.9 412.2 509.5 411.9 508.5 411.3 C507.5 410.6 507.7 409.3 507.8 408.5 C507.9 407.6 508.9 406.8 508.9 406.0 C508.9 405.2 507.9 404.4 507.8 403.5 C507.7 402.7 507.5 401.4 508.5 400.7 C509.5 400.1 511.9 399.8 513.6 399.5 C515.3 399.3 517.1 399.6 518.6 399.3 C520.2 399.0 521.4 398.3 523.0 398.0 C524.6 397.7 527.0 397.2 528.5 397.5 C530.1 397.7 531.4 398.8 532.4 399.5 C533.4 400.3 533.4 401.2 534.4 401.9 C535.4 402.5 537.1 402.8 538.2 403.5 C539.3 404.2 540.9 405.2 540.9 406.0 Z" fill="#bfe4a1"/><path d="M515.8 407.0 C515.8 407.6 515.0 408.4 514.4 408.9 C513.8 409.4 512.8 409.7 512.1 410.2 C511.4 410.6 510.9 411.2 510.1 411.6 C509.2 412.0 508.0 412.5 507.0 412.5 C506.0 412.5 504.8 412.0 503.9 411.6 C503.1 411.2 502.6 410.6 501.9 410.2 C501.2 409.7 500.2 409.4 499.6 408.9 C499.0 408.4 498.2 407.6 498.2 407.0 C498.2 406.4 499.0 405.6 499.6 405.1 C500.2 404.6 501.2 404.3 501.9 403.8 C502.6 403.4 503.1 402.8 503.9 402.4 C504.8 402.0 506.0 401.5 507.0 401.5 C508.0 401.5 509.2 402.0 510.1 402.4 C510.9 402.8 511.4 403.4 512.1 403.8 C512.8 404.3 513.8 404.6 514.4 405.1 C515.0 405.6 515.8 406.4 515.8 407.0 Z" fill="#5cac3c"/><path d="M519.8 389.7 C519.6 391.6 518.7 393.8 517.9 395.3 C517.2 396.8 516.3 397.4 515.5 398.7 C514.8 400.0 514.3 401.9 513.5 403.0 C512.6 404.2 511.4 405.8 510.5 405.7 C509.6 405.7 508.7 403.9 508.1 402.6 C507.5 401.3 507.4 399.3 506.8 397.9 C506.3 396.5 505.5 395.8 505.1 394.2 C504.6 392.6 504.0 390.2 504.2 388.3 C504.4 386.4 505.3 384.2 506.1 382.7 C506.8 381.2 507.7 380.6 508.5 379.3 C509.2 378.0 509.7 376.1 510.5 375.0 C511.4 373.8 512.6 372.2 513.5 372.3 C514.4 372.3 515.3 374.1 515.9 375.4 C516.5 376.7 516.6 378.7 517.2 380.1 C517.7 381.5 518.5 382.2 518.9 383.8 C519.4 385.4 520.0 387.8 519.8 389.7 Z" fill="#bfe4a1"/><path d="M512.6 404.0 C513.0 402.9 513.5 399.0 513.7 396.7 C513.9 394.5 514.0 391.1 513.9 389.0 C513.8 386.9 513.3 384.2 512.9 382.8 C512.4 381.5 511.5 380.0 511.0 380.0 C510.5 380.0 509.7 381.6 509.4 383.0 C509.1 384.3 508.8 387.1 508.9 389.2 C508.9 391.3 509.3 394.7 509.7 396.9 C510.1 399.1 510.9 403.0 511.4 404.0 C511.8 405.1 512.3 405.1 512.6 404.0 Z" fill="#5cac3c"/><path d="M571.7 397.7 C571.5 399.4 570.2 401.1 569.3 402.3 C568.4 403.6 567.2 404.1 566.2 405.1 C565.2 406.2 564.4 407.6 563.3 408.4 C562.2 409.2 560.6 410.3 559.5 410.1 C558.4 409.9 557.3 408.4 556.5 407.2 C555.8 406.1 555.5 404.4 554.9 403.2 C554.3 401.9 553.4 400.9 552.9 399.5 C552.5 398.0 552.0 395.9 552.3 394.3 C552.5 392.6 553.8 390.9 554.7 389.7 C555.6 388.4 556.8 387.9 557.8 386.9 C558.8 385.8 559.6 384.4 560.7 383.6 C561.8 382.8 563.4 381.7 564.5 381.9 C565.6 382.1 566.7 383.6 567.5 384.8 C568.2 385.9 568.5 387.6 569.1 388.8 C569.7 390.1 570.6 391.1 571.1 392.5 C571.5 394.0 572.0 396.1 571.7 397.7 Z" fill="#bfe4a1"/><path d="M608.8 281.0 C608.4 284.1 607.2 287.7 606.3 290.2 C605.3 292.7 604.0 294.3 602.9 295.7 C601.7 297.2 600.5 298.6 599.4 298.8 C598.2 299.0 596.9 298.5 596.2 296.8 C595.5 295.1 595.1 291.6 595.1 288.6 C595.1 285.7 595.5 282.3 595.9 279.1 C596.4 276.0 596.9 272.6 597.7 269.8 C598.6 267.0 599.9 263.7 601.0 262.2 C602.2 260.8 603.6 260.7 604.6 261.2 C605.7 261.7 606.5 263.4 607.2 265.1 C607.9 266.8 608.6 268.7 608.9 271.4 C609.2 274.0 609.3 277.8 608.8 281.0 Z" fill="#bfe4a1"/><path d="M662.0 321.8 C662.9 324.8 659.7 330.6 659.4 334.0 C659.1 337.4 658.8 339.8 660.4 342.3 C662.1 344.8 667.9 346.4 669.4 349.1 C671.0 351.9 671.6 356.0 669.9 359.1 C668.2 362.1 661.9 364.7 659.2 367.3 C656.5 369.9 654.6 371.6 653.7 374.8 C652.8 378.0 655.1 383.3 653.9 386.6 C652.8 390.0 650.0 393.8 646.8 395.1 C643.5 396.4 637.9 394.2 634.3 394.5 C630.8 394.8 628.3 394.9 625.4 396.9 C622.5 398.9 619.9 404.8 616.7 406.8 C613.5 408.8 609.1 410.0 606.2 408.8 C603.3 407.7 601.6 402.0 599.3 399.8 C596.9 397.6 595.5 395.9 592.2 395.6 C589.0 395.3 583.1 398.3 579.7 397.7 C576.4 397.2 572.8 395.1 572.0 392.2 C571.1 389.2 574.3 383.4 574.6 380.0 C574.9 376.6 575.2 374.2 573.6 371.7 C571.9 369.2 566.1 367.6 564.6 364.9 C563.0 362.1 562.4 358.0 564.1 354.9 C565.8 351.9 572.1 349.3 574.8 346.7 C577.5 344.1 579.4 342.4 580.3 339.2 C581.2 336.0 578.9 330.7 580.1 327.4 C581.2 324.0 584.0 320.2 587.2 318.9 C590.5 317.6 596.1 319.8 599.7 319.5 C603.2 319.2 605.7 319.1 608.6 317.1 C611.5 315.1 614.1 309.2 617.3 307.2 C620.5 305.2 624.9 304.0 627.8 305.2 C630.7 306.3 632.4 312.0 634.7 314.2 C637.1 316.4 638.5 318.1 641.8 318.4 C645.0 318.7 650.9 315.7 654.3 316.3 C657.6 316.8 661.2 318.9 662.0 321.8 Z" fill="#bfe4a1"/><path d="M664.9 392.6 C661.6 389.3 648.6 378.7 641.0 372.8 C633.4 367.0 621.8 358.6 614.2 353.8 C606.7 349.0 596.2 343.3 590.8 340.9 C585.4 338.5 578.7 336.9 578.0 338.0 C577.3 339.1 581.5 344.5 585.8 348.5 C590.2 352.5 599.7 359.8 607.1 364.7 C614.6 369.7 627.0 377.0 635.4 381.6 C643.8 386.2 658.7 393.7 663.1 395.4 C667.5 397.0 668.2 396.0 664.9 392.6 Z" fill="#5cac3c"/><path d="M665.2 393.0 C663.1 388.9 654.2 375.4 648.8 367.9 C643.4 360.3 634.9 349.2 629.3 342.7 C623.6 336.1 615.6 327.9 611.2 324.2 C606.8 320.5 601.0 317.1 600.0 318.0 C599.0 318.9 601.3 325.1 604.2 330.1 C607.1 335.0 613.9 344.4 619.3 351.1 C624.8 357.7 634.3 368.0 640.8 374.5 C647.3 381.1 659.1 392.3 662.8 395.0 C666.4 397.8 667.3 397.0 665.2 393.0 Z" fill="#5cac3c"/><path d="M665.5 393.5 C665.4 389.9 663.3 377.7 661.7 370.8 C660.2 363.8 657.5 353.5 655.3 347.3 C653.1 341.1 649.5 333.0 647.2 329.2 C644.9 325.4 641.3 321.6 640.0 322.0 C638.7 322.4 638.1 327.7 638.6 332.1 C639.0 336.5 641.0 345.1 643.0 351.4 C644.9 357.7 648.9 367.6 651.9 374.0 C654.8 380.5 660.4 391.6 662.5 394.5 C664.5 397.4 665.7 397.0 665.5 393.5 Z" fill="#5cac3c"/><path d="M664.3 392.4 C660.9 390.8 648.4 386.7 641.2 384.7 C634.0 382.7 623.0 380.0 616.2 378.9 C609.3 377.8 599.9 377.0 595.3 377.2 C590.6 377.4 585.2 378.7 585.0 380.0 C584.8 381.3 589.4 384.4 593.7 386.2 C598.0 387.9 607.0 390.4 613.9 391.7 C620.7 393.0 631.9 394.3 639.4 394.9 C646.9 395.5 660.0 396.0 663.7 395.6 C667.5 395.2 667.7 394.0 664.3 392.4 Z" fill="#5cac3c"/><path d="M663.9 392.4 C661.7 391.5 654.1 390.4 649.7 390.0 C645.4 389.7 638.9 389.6 634.9 390.0 C630.9 390.4 625.7 391.8 623.1 393.0 C620.6 394.2 617.9 396.6 618.0 398.0 C618.1 399.4 621.2 401.3 623.9 402.1 C626.6 402.8 632.0 403.2 636.0 403.0 C640.1 402.7 646.4 401.5 650.7 400.4 C654.9 399.3 662.2 396.8 664.1 395.6 C666.1 394.4 666.0 393.2 663.9 392.4 Z" fill="#5cac3c"/><path d="M579.9 312.0 C579.9 312.9 579.0 313.9 578.3 314.7 C577.6 315.4 576.5 315.8 575.7 316.5 C574.9 317.1 574.4 317.9 573.4 318.5 C572.5 319.0 571.1 319.7 570.0 319.7 C568.9 319.7 567.5 319.0 566.6 318.5 C565.6 317.9 565.1 317.1 564.3 316.5 C563.5 315.8 562.4 315.4 561.7 314.7 C561.0 313.9 560.1 312.9 560.1 312.0 C560.1 311.1 561.0 310.1 561.7 309.3 C562.4 308.6 563.5 308.2 564.3 307.5 C565.1 306.9 565.6 306.1 566.6 305.5 C567.5 305.0 568.9 304.3 570.0 304.3 C571.1 304.3 572.5 305.0 573.4 305.5 C574.4 306.1 574.9 306.9 575.7 307.5 C576.5 308.2 577.6 308.6 578.3 309.3 C579.0 310.1 579.9 311.1 579.9 312.0 Z" fill="#bfe4a1"/><path d="M761.1 327.8 C760.8 329.0 757.2 329.6 754.8 330.2 C752.5 330.7 748.8 330.3 747.0 331.0 C745.2 331.8 745.6 333.5 744.1 334.4 C742.6 335.4 740.8 337.0 738.0 337.0 C735.3 337.0 730.7 335.3 727.5 334.3 C724.3 333.3 721.8 331.6 718.8 330.8 C715.8 330.1 712.8 330.4 709.5 329.8 C706.1 329.2 701.4 328.5 698.9 327.2 C696.5 326.0 695.6 323.7 694.7 322.1 C693.9 320.6 695.0 319.2 693.8 317.8 C692.5 316.3 689.1 314.9 687.3 313.4 C685.5 311.8 682.6 309.5 682.9 308.2 C683.2 307.0 686.8 306.4 689.2 305.8 C691.5 305.3 695.2 305.7 697.0 305.0 C698.8 304.2 698.4 302.5 699.9 301.6 C701.4 300.6 703.2 299.0 706.0 299.0 C708.7 299.0 713.3 300.7 716.5 301.7 C719.7 302.7 722.2 304.4 725.2 305.2 C728.2 305.9 731.2 305.6 734.5 306.2 C737.9 306.8 742.6 307.5 745.1 308.8 C747.5 310.0 748.4 312.3 749.3 313.9 C750.1 315.4 749.0 316.8 750.2 318.2 C751.5 319.7 754.9 321.1 756.7 322.6 C758.5 324.2 761.4 326.5 761.1 327.8 Z" fill="#bfe4a1"/><path d="M689.7 313.0 C692.3 314.3 701.7 318.0 707.2 319.9 C712.6 321.8 720.9 324.5 726.2 325.8 C731.4 327.1 738.5 328.5 742.1 328.8 C745.7 329.1 749.8 328.8 750.0 328.0 C750.2 327.2 746.8 324.9 743.5 323.4 C740.3 321.9 733.4 319.5 728.2 318.1 C723.0 316.6 714.5 314.8 708.8 313.7 C703.1 312.7 693.1 311.1 690.3 311.0 C687.4 310.9 687.2 311.6 689.7 313.0 Z" fill="#5cac3c"/><path d="M690.0 313.0 C692.1 313.5 699.4 314.3 703.6 314.6 C707.8 314.9 714.2 315.0 718.1 314.8 C722.0 314.5 727.2 313.8 729.7 313.0 C732.3 312.3 735.0 310.8 735.0 310.0 C735.0 309.2 732.1 307.9 729.5 307.4 C726.9 307.0 721.6 306.6 717.7 306.8 C713.8 306.9 707.5 307.6 703.4 308.2 C699.2 308.8 692.0 310.3 690.0 311.0 C688.0 311.7 688.0 312.5 690.0 313.0 Z" fill="#5cac3c"/><path d="M712.4 330.9 C712.9 331.7 712.4 333.4 711.9 334.6 C711.5 335.9 710.4 337.1 709.7 338.3 C709.1 339.5 708.9 340.7 708.0 341.9 C707.1 343.1 705.8 344.8 704.4 345.6 C703.0 346.5 700.9 346.7 699.4 346.9 C697.9 347.0 696.8 346.6 695.4 346.5 C694.0 346.5 692.4 346.9 691.1 346.7 C689.8 346.4 688.1 346.0 687.6 345.1 C687.1 344.3 687.6 342.6 688.1 341.4 C688.5 340.1 689.6 338.9 690.3 337.7 C690.9 336.5 691.1 335.3 692.0 334.1 C692.9 332.9 694.2 331.2 695.6 330.4 C697.0 329.5 699.1 329.3 700.6 329.1 C702.1 329.0 703.2 329.4 704.6 329.5 C706.0 329.5 707.6 329.1 708.9 329.3 C710.2 329.6 711.9 330.0 712.4 330.9 Z" fill="#bfe4a1"/><path d="M751.3 306.1 C751.2 307.1 749.4 308.0 748.0 308.6 C746.7 309.2 744.7 309.3 743.1 309.8 C741.6 310.2 740.5 311.0 738.7 311.3 C737.0 311.7 734.5 312.0 732.5 311.7 C730.5 311.3 728.3 310.1 726.7 309.2 C725.1 308.3 724.4 307.2 723.1 306.2 C721.8 305.3 720.0 304.5 718.9 303.4 C717.8 302.4 716.5 300.9 716.7 299.9 C716.8 298.9 718.6 298.0 720.0 297.4 C721.3 296.8 723.3 296.7 724.9 296.2 C726.4 295.8 727.5 295.0 729.3 294.7 C731.0 294.3 733.5 294.0 735.5 294.3 C737.5 294.7 739.7 295.9 741.3 296.8 C742.9 297.7 743.6 298.8 744.9 299.8 C746.2 300.7 748.0 301.5 749.1 302.6 C750.2 303.6 751.5 305.1 751.3 306.1 Z" fill="#5cac3c"/><path d="M686.1 259.5 C686.7 260.2 686.4 261.8 686.2 262.9 C686.0 264.1 685.1 265.3 684.7 266.5 C684.3 267.7 684.3 268.8 683.7 270.0 C683.0 271.2 682.1 272.9 680.9 273.9 C679.8 274.9 678.0 275.5 676.6 275.9 C675.3 276.3 674.2 276.1 673.0 276.3 C671.8 276.5 670.4 277.2 669.2 277.2 C668.0 277.2 666.5 277.2 665.9 276.5 C665.3 275.8 665.6 274.2 665.8 273.1 C666.0 271.9 666.9 270.7 667.3 269.5 C667.7 268.3 667.7 267.2 668.3 266.0 C669.0 264.8 669.9 263.1 671.1 262.1 C672.2 261.1 674.0 260.5 675.4 260.1 C676.7 259.7 677.8 259.9 679.0 259.7 C680.2 259.5 681.6 258.8 682.8 258.8 C684.0 258.8 685.5 258.8 686.1 259.5 Z" fill="#bfe4a1"/><path d="M651.3 246.5 C651.1 248.6 650.4 251.1 649.7 252.9 C649.1 254.6 648.2 255.7 647.4 256.7 C646.6 257.8 645.7 258.8 644.9 259.0 C644.0 259.1 642.9 258.8 642.3 257.7 C641.7 256.5 641.3 254.1 641.1 252.1 C641.0 250.1 641.1 247.7 641.3 245.6 C641.5 243.4 641.7 241.1 642.3 239.1 C642.8 237.2 643.6 234.9 644.4 233.9 C645.2 232.9 646.3 232.8 647.1 233.0 C647.9 233.3 648.6 234.5 649.3 235.7 C649.9 236.8 650.5 238.1 650.9 239.9 C651.2 241.7 651.5 244.3 651.3 246.5 Z" fill="#bfe4a1"/><path d="M709.9 292.0 C709.9 292.8 709.0 293.7 708.3 294.3 C707.6 294.9 706.5 295.3 705.7 295.8 C704.9 296.4 704.4 297.1 703.4 297.5 C702.5 298.0 701.1 298.6 700.0 298.6 C698.9 298.6 697.5 298.0 696.6 297.5 C695.6 297.1 695.1 296.4 694.3 295.8 C693.5 295.3 692.4 294.9 691.7 294.3 C691.0 293.7 690.1 292.8 690.1 292.0 C690.1 291.2 691.0 290.3 691.7 289.7 C692.4 289.1 693.5 288.7 694.3 288.2 C695.1 287.6 695.6 286.9 696.6 286.5 C697.5 286.0 698.9 285.4 700.0 285.4 C701.1 285.4 702.5 286.0 703.4 286.5 C704.4 286.9 704.9 287.6 705.7 288.2 C706.5 288.7 707.6 289.1 708.3 289.7 C709.0 290.3 709.9 291.2 709.9 292.0 Z" fill="#5cac3c"/><path d="M786.4 400.8 C786.6 401.8 785.1 403.2 784.0 404.3 C782.9 405.4 780.9 406.2 779.5 407.1 C778.2 408.1 777.4 409.2 775.7 410.1 C774.0 411.1 771.7 412.3 769.5 412.7 C767.4 413.0 764.8 412.7 762.9 412.4 C761.0 412.1 759.9 411.3 758.2 410.9 C756.6 410.4 754.5 410.3 753.1 409.7 C751.6 409.1 749.8 408.3 749.6 407.2 C749.4 406.2 750.9 404.8 752.0 403.7 C753.1 402.6 755.1 401.8 756.5 400.9 C757.8 399.9 758.6 398.8 760.3 397.9 C762.0 396.9 764.3 395.7 766.5 395.3 C768.6 395.0 771.2 395.3 773.1 395.6 C775.0 395.9 776.1 396.7 777.8 397.1 C779.4 397.6 781.5 397.7 782.9 398.3 C784.4 398.9 786.2 399.7 786.4 400.8 Z" fill="#bfe4a1"/><path d="M750.3 405.0 C750.3 405.9 749.0 406.9 748.0 407.7 C747.0 408.4 745.4 408.8 744.3 409.5 C743.1 410.1 742.4 410.9 741.0 411.5 C739.6 412.0 737.7 412.7 736.0 412.7 C734.3 412.7 732.4 412.0 731.0 411.5 C729.6 410.9 728.9 410.1 727.7 409.5 C726.6 408.8 725.0 408.4 724.0 407.7 C723.0 406.9 721.7 405.9 721.7 405.0 C721.7 404.1 723.0 403.1 724.0 402.3 C725.0 401.6 726.6 401.2 727.7 400.5 C728.9 399.9 729.6 399.1 731.0 398.5 C732.4 398.0 734.3 397.3 736.0 397.3 C737.7 397.3 739.6 398.0 741.0 398.5 C742.4 399.1 743.1 399.9 744.3 400.5 C745.4 401.2 747.0 401.6 748.0 402.3 C749.0 403.1 750.3 404.1 750.3 405.0 Z" fill="#5cac3c"/><path d="M721.9 404.0 C721.9 404.8 721.0 405.7 720.3 406.3 C719.6 406.9 718.5 407.3 717.7 407.8 C716.9 408.4 716.4 409.1 715.4 409.5 C714.5 410.0 713.1 410.6 712.0 410.6 C710.9 410.6 709.5 410.0 708.6 409.5 C707.6 409.1 707.1 408.4 706.3 407.8 C705.5 407.3 704.4 406.9 703.7 406.3 C703.0 405.7 702.1 404.8 702.1 404.0 C702.1 403.2 703.0 402.3 703.7 401.7 C704.4 401.1 705.5 400.7 706.3 400.2 C707.1 399.6 707.6 398.9 708.6 398.5 C709.5 398.0 710.9 397.4 712.0 397.4 C713.1 397.4 714.5 398.0 715.4 398.5 C716.4 398.9 716.9 399.6 717.7 400.2 C718.5 400.7 719.6 401.1 720.3 401.7 C721.0 402.3 721.9 403.2 721.9 404.0 Z" fill="#bfe4a1"/><circle cx="404" cy="292" r="13.6" fill="#8a939a"/><circle cx="414" cy="282" r="10.6" fill="#8a939a"/><circle cx="396" cy="308" r="11.6" fill="#8a939a"/><circle cx="388" cy="320" r="7.6" fill="#8a939a"/><circle cx="410" cy="306" r="8.6" fill="#8a939a"/><circle cx="404" cy="292" r="13" fill="#c6ced4"/><circle cx="414" cy="282" r="10" fill="#c6ced4"/><circle cx="396" cy="308" r="11" fill="#c6ced4"/><circle cx="388" cy="320" r="7" fill="#c6ced4"/><circle cx="410" cy="306" r="8" fill="#c6ced4"/><circle cx="432" cy="268" r="11.6" fill="#8a939a"/><circle cx="442" cy="262" r="9.6" fill="#8a939a"/><circle cx="436" cy="278" r="9.6" fill="#8a939a"/><circle cx="426" cy="276" r="7.6" fill="#8a939a"/><circle cx="432" cy="268" r="11" fill="#c6ced4"/><circle cx="442" cy="262" r="9" fill="#c6ced4"/><circle cx="436" cy="278" r="9" fill="#c6ced4"/><circle cx="426" cy="276" r="7" fill="#c6ced4"/><path d="M343.1 317.1 Q338.3 343.0 343.0 365.0" fill="none" stroke="#c6ced4" stroke-width="4" stroke-linecap="round"/><path d="M350.5 324.5 Q347.2 348.4 352.3 368.4" fill="none" stroke="#c6ced4" stroke-width="4" stroke-linecap="round"/><path d="M358.0 332.0 Q355.8 353.8 361.2 371.7" fill="none" stroke="#c6ced4" stroke-width="4" stroke-linecap="round"/><path d="M365.5 339.5 Q364.3 359.1 369.9 375.0" fill="none" stroke="#c6ced4" stroke-width="4" stroke-linecap="round"/><path d="M372.9 346.9 Q372.6 364.4 378.1 378.3" fill="none" stroke="#c6ced4" stroke-width="4" stroke-linecap="round"/><path d="M380.4 354.4 Q380.8 369.7 386.1 381.6" fill="none" stroke="#c6ced4" stroke-width="4" stroke-linecap="round"/><path d="M387.9 361.9 Q388.7 374.9 393.7 384.9" fill="none" stroke="#c6ced4" stroke-width="4" stroke-linecap="round"/><path d="M343.1 317.1 Q369.0 312.3 391.0 317.0" fill="none" stroke="#c6ced4" stroke-width="4" stroke-linecap="round"/><path d="M350.5 324.5 Q374.4 321.2 394.4 326.3" fill="none" stroke="#c6ced4" stroke-width="4" stroke-linecap="round"/><path d="M358.0 332.0 Q379.8 329.8 397.7 335.2" fill="none" stroke="#c6ced4" stroke-width="4" stroke-linecap="round"/><path d="M365.5 339.5 Q385.1 338.3 401.0 343.9" fill="none" stroke="#c6ced4" stroke-width="4" stroke-linecap="round"/><path d="M372.9 346.9 Q390.4 346.6 404.3 352.1" fill="none" stroke="#c6ced4" stroke-width="4" stroke-linecap="round"/><path d="M380.4 354.4 Q395.7 354.8 407.6 360.1" fill="none" stroke="#c6ced4" stroke-width="4" stroke-linecap="round"/><path d="M387.9 361.9 Q400.9 362.7 410.9 367.7" fill="none" stroke="#c6ced4" stroke-width="4" stroke-linecap="round"/><path d="M380.7 354.7 L401.7 375.7" stroke="#c6ced4" stroke-width="4" stroke-linecap="round"/><path d="M321.6 332.4 L352.2 352.7 L389.5 366.3 L392.3 363.5 L378.7 326.2 L358.4 295.6 Z" fill="#c6ced4" stroke="#c6ced4" stroke-width="1.4" stroke-linejoin="round"/><path d="M587.2 216.4 Q564.0 210.0 543.6 212.6" fill="none" stroke="#c6ced4" stroke-width="4" stroke-linecap="round"/><path d="M580.2 222.2 Q558.7 217.3 540.1 220.4" fill="none" stroke="#c6ced4" stroke-width="4" stroke-linecap="round"/><path d="M573.2 228.1 Q553.4 224.4 536.6 227.9" fill="none" stroke="#c6ced4" stroke-width="4" stroke-linecap="round"/><path d="M566.3 233.9 Q548.3 231.3 533.3 235.1" fill="none" stroke="#c6ced4" stroke-width="4" stroke-linecap="round"/><path d="M559.3 239.8 Q543.2 238.1 530.0 242.0" fill="none" stroke="#c6ced4" stroke-width="4" stroke-linecap="round"/><path d="M552.3 245.6 Q538.1 244.7 526.7 248.7" fill="none" stroke="#c6ced4" stroke-width="4" stroke-linecap="round"/><path d="M545.4 251.5 Q533.1 251.2 523.4 255.0" fill="none" stroke="#c6ced4" stroke-width="4" stroke-linecap="round"/><path d="M587.2 216.4 Q589.4 240.3 583.4 260.0" fill="none" stroke="#c6ced4" stroke-width="4" stroke-linecap="round"/><path d="M580.2 222.2 Q581.3 244.3 575.1 262.1" fill="none" stroke="#c6ced4" stroke-width="4" stroke-linecap="round"/><path d="M573.2 228.1 Q573.4 248.2 567.1 264.1" fill="none" stroke="#c6ced4" stroke-width="4" stroke-linecap="round"/><path d="M566.3 233.9 Q565.7 252.1 559.4 266.2" fill="none" stroke="#c6ced4" stroke-width="4" stroke-linecap="round"/><path d="M559.3 239.8 Q558.1 255.9 552.0 268.3" fill="none" stroke="#c6ced4" stroke-width="4" stroke-linecap="round"/><path d="M552.3 245.6 Q550.7 259.7 544.9 270.4" fill="none" stroke="#c6ced4" stroke-width="4" stroke-linecap="round"/><path d="M545.4 251.5 Q543.5 263.6 538.1 272.5" fill="none" stroke="#c6ced4" stroke-width="4" stroke-linecap="round"/><path d="M552.0 245.9 L531.5 263.1" stroke="#c6ced4" stroke-width="4" stroke-linecap="round"/><path d="M575.9 197.1 L556.1 221.8 L541.2 252.3 L543.8 255.4 L576.4 246.1 L604.1 230.9 Z" fill="#c6ced4" stroke="#c6ced4" stroke-width="1.4" stroke-linejoin="round"/><circle cx="660" cy="250" r="12.6" fill="#8a939a"/><circle cx="676" cy="256" r="12.6" fill="#8a939a"/><circle cx="692" cy="262" r="9.6" fill="#8a939a"/><circle cx="652" cy="240" r="8.6" fill="#8a939a"/><circle cx="660" cy="250" r="12" fill="#c6ced4"/><circle cx="676" cy="256" r="12" fill="#c6ced4"/><circle cx="692" cy="262" r="9" fill="#c6ced4"/><circle cx="652" cy="240" r="8" fill="#c6ced4"/><circle cx="660" cy="290" r="13.6" fill="#8a939a"/><circle cx="676" cy="286" r="13.6" fill="#8a939a"/><circle cx="668" cy="304" r="12.6" fill="#8a939a"/><circle cx="684" cy="300" r="10.6" fill="#8a939a"/><circle cx="654" cy="302" r="8.6" fill="#8a939a"/><circle cx="660" cy="290" r="13" fill="#c6ced4"/><circle cx="676" cy="286" r="13" fill="#c6ced4"/><circle cx="668" cy="304" r="12" fill="#c6ced4"/><circle cx="684" cy="300" r="10" fill="#c6ced4"/><circle cx="654" cy="302" r="8" fill="#c6ced4"/><path d="M684 286 Q700 278 712 262" stroke="#c6ced4" stroke-width="4" fill="none"/><path d="M712 268 L710 296" stroke="#c6ced4" stroke-width="4" fill="none"/><circle cx="710" cy="305" r="13.1" fill="#8a939a"/><circle cx="710" cy="305" r="12.5" fill="#c6ced4"/><path d="M789.8 349.7 Q777.4 330.4 761.4 319.1" fill="none" stroke="#c6ced4" stroke-width="4" stroke-linecap="round"/><path d="M779.6 349.0 Q767.5 331.7 752.4 322.0" fill="none" stroke="#c6ced4" stroke-width="4" stroke-linecap="round"/><path d="M769.3 348.3 Q757.8 333.0 743.7 324.7" fill="none" stroke="#c6ced4" stroke-width="4" stroke-linecap="round"/><path d="M759.1 347.6 Q748.1 334.2 735.2 327.3" fill="none" stroke="#c6ced4" stroke-width="4" stroke-linecap="round"/><path d="M748.8 346.8 Q738.7 335.4 726.9 329.7" fill="none" stroke="#c6ced4" stroke-width="4" stroke-linecap="round"/><path d="M738.6 346.1 Q729.3 336.5 718.8 331.9" fill="none" stroke="#c6ced4" stroke-width="4" stroke-linecap="round"/><path d="M728.4 345.4 Q720.1 337.4 710.9 333.9" fill="none" stroke="#c6ced4" stroke-width="4" stroke-linecap="round"/><path d="M789.8 349.7 Q774.9 367.2 757.4 376.0" fill="none" stroke="#c6ced4" stroke-width="4" stroke-linecap="round"/><path d="M779.6 349.0 Q765.2 364.4 748.9 371.9" fill="none" stroke="#c6ced4" stroke-width="4" stroke-linecap="round"/><path d="M769.3 348.3 Q755.8 361.8 740.6 368.0" fill="none" stroke="#c6ced4" stroke-width="4" stroke-linecap="round"/><path d="M759.1 347.6 Q746.4 359.2 732.6 364.3" fill="none" stroke="#c6ced4" stroke-width="4" stroke-linecap="round"/><path d="M748.8 346.8 Q737.2 356.8 724.7 360.8" fill="none" stroke="#c6ced4" stroke-width="4" stroke-linecap="round"/><path d="M738.6 346.1 Q728.0 354.4 717.0 357.5" fill="none" stroke="#c6ced4" stroke-width="4" stroke-linecap="round"/><path d="M728.4 345.4 Q719.0 352.1 709.5 354.4" fill="none" stroke="#c6ced4" stroke-width="4" stroke-linecap="round"/><path d="M738.1 346.1 L710.7 344.2" stroke="#c6ced4" stroke-width="4" stroke-linecap="round"/><path d="M795.5 328.1 L760.2 331.8 L724.3 343.1 L724.0 347.1 L758.0 363.4 L792.5 371.9 Z" fill="#c6ced4" stroke="#c6ced4" stroke-width="1.4" stroke-linejoin="round"/><circle cx="481.0" cy="251.0" r="17.3" fill="#ea5519"/><circle cx="500.0" cy="270.0" r="17.3" fill="#ea5519"/><circle cx="474.0" cy="277.0" r="17.3" fill="#ea5519"/><circle cx="485" cy="266" r="12.1" fill="#ea5519"/><circle cx="443.7" cy="334.7" r="17.3" fill="#ea5519"/><circle cx="452.9" cy="360.0" r="17.3" fill="#ea5519"/><circle cx="426.4" cy="355.3" r="17.3" fill="#ea5519"/><circle cx="441" cy="350" r="12.1" fill="#ea5519"/><circle cx="625.9" cy="255.8" r="17.3" fill="#ea5519"/><circle cx="599.1" cy="255.8" r="17.3" fill="#ea5519"/><circle cx="612.5" cy="232.5" r="17.3" fill="#ea5519"/><circle cx="612.5" cy="248" r="12.1" fill="#ea5519"/><circle cx="585.0" cy="309.0" r="17.3" fill="#ea5519"/><circle cx="592.0" cy="335.0" r="17.3" fill="#ea5519"/><circle cx="566.0" cy="328.0" r="17.3" fill="#ea5519"/><circle cx="581" cy="324" r="12.1" fill="#ea5519"/><circle cx="686.6" cy="370.6" r="17.3" fill="#ea5519"/><circle cx="702.0" cy="392.6" r="17.3" fill="#ea5519"/><circle cx="675.3" cy="394.9" r="17.3" fill="#ea5519"/><circle cx="688" cy="386" r="12.1" fill="#ea5519"/></g></g>
<g clip-path="url(#cc)"><g clip-path="url(#cb)"><rect x="320" y="498" width="490" height="200" fill="#1b4f15"/><path d="M434.3 525.3 C434.1 526.4 431.1 527.0 429.1 527.5 C427.1 528.0 424.1 527.7 422.3 528.2 C420.5 528.7 420.1 529.9 418.2 530.5 C416.4 531.1 413.9 531.9 411.2 531.6 C408.6 531.3 404.9 529.8 402.3 528.7 C399.7 527.6 398.1 526.1 395.6 525.2 C393.2 524.2 390.1 523.8 387.4 522.8 C384.8 521.8 380.9 520.4 379.5 519.1 C378.1 517.8 378.9 516.2 379.3 515.1 C379.7 513.9 381.7 513.4 381.9 512.3 C382.2 511.2 380.7 509.7 380.9 508.5 C381.1 507.3 381.2 505.5 383.0 505.1 C384.8 504.6 388.9 505.2 391.8 505.5 C394.6 505.9 397.5 507.0 400.1 507.3 C402.8 507.6 404.9 507.1 407.7 507.3 C410.5 507.6 414.4 507.9 416.9 508.9 C419.4 509.9 421.2 511.8 422.6 513.2 C423.9 514.6 423.7 515.8 425.0 517.1 C426.4 518.4 429.2 519.5 430.7 520.9 C432.3 522.3 434.6 524.2 434.3 525.3 Z" fill="#5cac3c"/><path d="M381.7 512.9 C383.5 514.3 390.6 517.9 394.7 519.8 C398.9 521.7 405.2 524.4 409.2 525.7 C413.2 527.0 418.7 528.4 421.6 528.7 C424.4 529.1 427.7 528.8 428.0 528.0 C428.3 527.2 425.8 524.9 423.4 523.4 C421.0 522.0 415.8 519.6 411.8 518.1 C407.9 516.7 401.3 514.8 396.9 513.8 C392.4 512.7 384.6 511.2 382.3 511.1 C380.1 510.9 379.8 511.6 381.7 512.9 Z" fill="#5cac3c"/><path d="M433.6 513.4 C434.1 515.4 433.8 517.9 433.6 519.8 C433.4 521.6 432.6 522.7 432.2 524.4 C431.8 526.0 431.8 527.9 431.2 529.4 C430.6 530.8 429.7 532.7 428.6 533.0 C427.4 533.3 425.7 532.1 424.5 531.2 C423.3 530.2 422.3 528.5 421.1 527.3 C419.9 526.1 418.7 525.5 417.6 524.1 C416.4 522.6 415.0 520.5 414.4 518.6 C413.9 516.6 414.2 514.1 414.4 512.2 C414.6 510.4 415.4 509.3 415.8 507.6 C416.2 506.0 416.2 504.1 416.8 502.6 C417.4 501.2 418.3 499.3 419.4 499.0 C420.6 498.7 422.3 499.9 423.5 500.8 C424.7 501.8 425.7 503.5 426.9 504.7 C428.1 505.9 429.3 506.5 430.4 507.9 C431.6 509.4 433.0 511.5 433.6 513.4 Z" fill="#bfe4a1"/><path d="M371.9 565.0 C371.9 566.5 371.0 568.3 370.3 569.6 C369.6 570.9 368.5 571.6 367.7 572.6 C366.9 573.7 366.4 575.2 365.4 576.1 C364.5 577.0 363.1 578.2 362.0 578.2 C360.9 578.2 359.5 577.0 358.6 576.1 C357.6 575.2 357.1 573.7 356.3 572.6 C355.5 571.6 354.4 570.9 353.7 569.6 C353.0 568.3 352.1 566.5 352.1 565.0 C352.1 563.5 353.0 561.7 353.7 560.4 C354.4 559.1 355.5 558.4 356.3 557.4 C357.1 556.3 357.6 554.8 358.6 553.9 C359.5 553.0 360.9 551.8 362.0 551.8 C363.1 551.8 364.5 553.0 365.4 553.9 C366.4 554.8 366.9 556.3 367.7 557.4 C368.5 558.4 369.6 559.1 370.3 560.4 C371.0 561.7 371.9 563.5 371.9 565.0 Z" fill="#bfe4a1"/><path d="M370.6 568.0 C370.6 569.0 370.0 570.2 369.5 571.1 C369.1 571.9 368.4 572.4 367.8 573.1 C367.3 573.8 366.9 574.8 366.3 575.4 C365.7 576.0 364.8 576.8 364.0 576.8 C363.2 576.8 362.3 576.0 361.7 575.4 C361.1 574.8 360.7 573.8 360.2 573.1 C359.6 572.4 358.9 571.9 358.5 571.1 C358.0 570.2 357.4 569.0 357.4 568.0 C357.4 567.0 358.0 565.8 358.5 564.9 C358.9 564.1 359.6 563.6 360.2 562.9 C360.7 562.2 361.1 561.2 361.7 560.6 C362.3 560.0 363.2 559.2 364.0 559.2 C364.8 559.2 365.7 560.0 366.3 560.6 C366.9 561.2 367.3 562.2 367.8 562.9 C368.4 563.6 369.1 564.1 369.5 564.9 C370.0 565.8 370.6 567.0 370.6 568.0 Z" fill="#5cac3c"/><path d="M576.6 510.0 C577.4 512.3 574.7 516.8 573.9 519.7 C573.1 522.6 571.3 525.0 572.0 527.3 C572.7 529.6 576.9 531.1 578.1 533.5 C579.3 535.9 580.7 539.3 579.4 541.7 C578.1 544.1 573.0 546.1 570.3 548.0 C567.6 549.9 564.6 550.7 563.2 553.1 C561.8 555.5 563.1 559.5 561.9 562.3 C560.7 565.1 558.9 568.9 556.3 570.0 C553.6 571.2 549.1 569.5 546.0 569.3 C543.0 569.1 540.6 567.8 538.0 568.9 C535.3 569.9 532.8 574.1 530.0 575.7 C527.1 577.3 523.1 579.2 520.6 578.4 C518.2 577.7 516.9 573.2 515.3 571.1 C513.7 568.9 513.3 566.3 510.9 565.4 C508.6 564.5 503.9 566.4 501.0 565.8 C498.0 565.3 494.2 564.2 493.4 562.0 C492.6 559.7 495.3 555.2 496.1 552.3 C496.9 549.4 498.7 547.0 498.0 544.7 C497.3 542.4 493.1 540.9 491.9 538.5 C490.7 536.1 489.3 532.7 490.6 530.3 C491.9 527.9 497.0 525.9 499.7 524.0 C502.4 522.1 505.4 521.3 506.8 518.9 C508.2 516.5 506.9 512.5 508.1 509.7 C509.3 506.9 511.1 503.1 513.7 502.0 C516.4 500.8 520.9 502.5 524.0 502.7 C527.0 502.9 529.4 504.2 532.0 503.1 C534.7 502.1 537.2 497.9 540.0 496.3 C542.9 494.7 546.9 492.8 549.4 493.6 C551.8 494.3 553.1 498.8 554.7 500.9 C556.3 503.1 556.7 505.7 559.1 506.6 C561.4 507.5 566.1 505.6 569.0 506.2 C572.0 506.7 575.8 507.8 576.6 510.0 Z" fill="#bfe4a1"/><path d="M501.0 559.2 C504.3 557.6 515.1 550.8 521.1 546.7 C527.1 542.6 535.9 536.0 541.0 531.6 C546.2 527.2 552.6 520.8 555.5 517.2 C558.3 513.7 560.8 509.0 560.0 508.0 C559.2 507.0 554.1 508.6 550.1 510.8 C546.1 512.9 538.6 518.1 533.4 522.4 C528.1 526.7 520.1 534.1 514.9 539.3 C509.8 544.5 501.1 553.9 499.0 556.8 C496.9 559.8 497.7 560.7 501.0 559.2 Z" fill="#5cac3c"/><path d="M501.0 559.1 C503.5 558.1 511.1 553.1 515.3 550.1 C519.5 547.0 525.5 542.2 528.9 538.8 C532.4 535.4 536.4 530.4 538.1 527.6 C539.8 524.8 540.9 520.9 540.0 520.0 C539.1 519.1 535.2 520.0 532.3 521.5 C529.4 523.0 524.2 526.8 520.7 530.1 C517.1 533.3 511.9 539.1 508.7 543.1 C505.4 547.1 500.1 554.5 499.0 556.9 C497.8 559.3 498.6 560.1 501.0 559.1 Z" fill="#5cac3c"/><path d="M500.5 559.4 C504.1 559.0 516.4 556.0 523.3 554.1 C530.3 552.1 540.6 548.8 546.8 546.2 C553.0 543.7 561.1 539.7 564.9 537.3 C568.7 534.8 572.5 531.2 572.0 530.0 C571.5 528.8 566.3 528.7 561.8 529.4 C557.4 530.2 548.8 532.7 542.5 535.0 C536.2 537.4 526.3 541.9 519.9 545.1 C513.4 548.4 502.4 554.5 499.5 556.6 C496.6 558.7 497.0 559.8 500.5 559.4 Z" fill="#5cac3c"/><path d="M501.4 558.6 C503.1 556.9 507.9 550.1 510.4 546.1 C512.9 542.1 516.2 535.9 517.9 531.9 C519.6 527.8 521.1 522.2 521.5 519.2 C521.8 516.2 521.2 512.5 520.0 512.0 C518.8 511.5 515.7 513.6 513.7 515.8 C511.8 518.1 508.7 523.1 506.9 527.1 C505.1 531.1 502.8 537.7 501.6 542.3 C500.4 546.8 498.7 555.0 498.6 557.4 C498.6 559.8 499.6 560.3 501.4 558.6 Z" fill="#5cac3c"/><path d="M576.8 517.9 C576.5 519.9 575.1 522.1 574.0 523.6 C573.0 525.2 571.6 525.9 570.5 527.1 C569.4 528.4 568.5 530.2 567.2 531.2 C565.9 532.3 564.2 533.6 562.9 533.3 C561.7 533.1 560.5 531.3 559.7 529.9 C558.8 528.5 558.6 526.5 558.0 524.9 C557.3 523.3 556.3 522.2 555.8 520.4 C555.4 518.6 554.8 516.1 555.2 514.1 C555.5 512.1 556.9 509.9 558.0 508.4 C559.0 506.8 560.4 506.1 561.5 504.9 C562.6 503.6 563.5 501.8 564.8 500.8 C566.1 499.7 567.8 498.4 569.1 498.7 C570.3 498.9 571.5 500.7 572.3 502.1 C573.2 503.5 573.4 505.5 574.0 507.1 C574.7 508.7 575.7 509.8 576.2 511.6 C576.6 513.4 577.2 515.9 576.8 517.9 Z" fill="#bfe4a1"/><path d="M522.8 567.5 C523.0 568.7 519.9 570.6 518.0 571.9 C516.1 573.2 512.6 574.1 511.3 575.4 C509.9 576.6 510.9 578.0 509.9 579.4 C508.9 580.7 507.8 582.8 505.3 583.7 C502.8 584.7 498.1 584.9 494.9 585.1 C491.6 585.4 488.7 584.8 485.7 585.2 C482.7 585.6 480.1 587.0 476.9 587.7 C473.7 588.3 469.2 589.4 466.5 589.2 C463.8 588.9 462.2 587.3 460.9 586.2 C459.5 585.2 460.1 583.6 458.4 582.8 C456.8 582.0 453.2 582.0 451.0 581.3 C448.8 580.6 445.3 579.7 445.2 578.5 C445.0 577.3 448.1 575.4 450.0 574.1 C451.9 572.8 455.4 571.9 456.7 570.6 C458.1 569.4 457.1 568.0 458.1 566.6 C459.1 565.3 460.2 563.2 462.7 562.3 C465.2 561.3 469.9 561.1 473.1 560.9 C476.4 560.6 479.3 561.2 482.3 560.8 C485.3 560.4 487.9 559.0 491.1 558.3 C494.3 557.7 498.8 556.6 501.5 556.8 C504.2 557.1 505.8 558.7 507.1 559.8 C508.5 560.8 507.9 562.4 509.6 563.2 C511.2 564.0 514.8 564.0 517.0 564.7 C519.2 565.4 522.7 566.3 522.8 567.5 Z" fill="#bfe4a1"/><path d="M511.6 560.9 C509.0 561.1 499.8 562.8 494.7 564.0 C489.5 565.2 481.8 567.3 477.1 568.9 C472.4 570.5 466.3 573.2 463.5 574.9 C460.6 576.5 457.7 579.1 458.0 580.0 C458.3 580.9 462.2 581.2 465.5 580.8 C468.8 580.4 475.2 578.9 479.9 577.4 C484.7 575.9 492.1 573.0 496.9 570.8 C501.8 568.7 510.1 564.5 512.4 563.1 C514.6 561.6 514.3 560.8 511.6 560.9 Z" fill="#5cac3c"/><path d="M511.9 560.9 C509.9 560.4 503.0 559.7 499.1 559.6 C495.1 559.5 489.2 559.6 485.5 560.0 C481.9 560.4 477.1 561.5 474.7 562.4 C472.4 563.3 469.9 565.1 470.0 566.0 C470.1 566.9 472.9 568.2 475.3 568.7 C477.8 569.1 482.7 569.2 486.4 569.0 C490.0 568.7 495.9 567.7 499.7 566.8 C503.6 565.9 510.3 564.0 512.1 563.1 C513.9 562.2 513.9 561.4 511.9 560.9 Z" fill="#5cac3c"/><path d="M391.4 592.5 C391.1 593.4 389.6 593.9 388.5 594.3 C387.4 594.7 385.9 594.6 384.7 594.8 C383.4 595.0 382.5 595.6 381.1 595.6 C379.7 595.7 377.8 595.8 376.4 595.2 C374.9 594.7 373.5 593.5 372.5 592.5 C371.5 591.6 371.1 590.5 370.3 589.6 C369.5 588.6 368.3 587.7 367.7 586.7 C367.0 585.7 366.3 584.3 366.6 583.5 C366.9 582.6 368.4 582.1 369.5 581.7 C370.6 581.3 372.1 581.4 373.3 581.2 C374.6 581.0 375.5 580.4 376.9 580.4 C378.3 580.3 380.2 580.2 381.6 580.8 C383.1 581.3 384.5 582.5 385.5 583.5 C386.5 584.4 386.9 585.5 387.7 586.4 C388.5 587.4 389.7 588.3 390.3 589.3 C391.0 590.3 391.7 591.7 391.4 592.5 Z" fill="#bfe4a1"/><path d="M455.3 608.8 C455.9 609.8 455.5 611.7 455.2 613.1 C454.9 614.5 453.9 615.7 453.6 617.0 C453.3 618.4 453.8 619.6 453.5 621.0 C453.2 622.4 452.8 624.3 451.7 625.3 C450.6 626.4 448.5 626.9 447.0 627.4 C445.5 627.8 444.0 627.6 442.5 628.0 C441.1 628.4 439.8 629.4 438.2 629.8 C436.7 630.2 434.6 630.8 433.3 630.4 C432.0 630.0 431.2 628.5 430.5 627.3 C429.8 626.2 429.9 624.8 429.3 623.8 C428.7 622.7 427.4 622.1 426.8 620.9 C426.2 619.8 425.3 618.3 425.6 617.0 C425.8 615.6 427.4 614.1 428.5 613.0 C429.6 611.9 431.2 611.3 432.3 610.2 C433.3 609.1 433.9 607.7 435.0 606.6 C436.1 605.5 437.7 604.0 439.1 603.6 C440.6 603.2 442.4 603.8 443.8 604.2 C445.1 604.6 446.0 605.6 447.3 606.0 C448.6 606.5 450.2 606.2 451.5 606.7 C452.8 607.1 454.7 607.7 455.3 608.8 Z" fill="#bfe4a1"/><path d="M453.4 612.4 C453.9 613.2 453.5 614.6 453.3 615.7 C453.0 616.8 452.2 617.7 451.9 618.8 C451.7 619.8 452.0 620.7 451.7 621.8 C451.5 622.8 451.1 624.3 450.2 625.1 C449.4 626.0 447.7 626.4 446.5 626.8 C445.3 627.2 444.1 627.0 443.0 627.3 C441.8 627.7 440.7 628.5 439.5 628.8 C438.3 629.2 436.7 629.7 435.7 629.4 C434.7 629.1 434.0 627.9 433.5 627.1 C433.0 626.3 433.1 625.2 432.6 624.4 C432.2 623.6 431.2 623.1 430.7 622.3 C430.3 621.4 429.6 620.3 429.8 619.3 C430.1 618.3 431.3 617.1 432.3 616.2 C433.2 615.3 434.4 614.8 435.3 614.0 C436.1 613.2 436.6 612.1 437.5 611.2 C438.4 610.3 439.7 609.1 440.8 608.8 C442.0 608.5 443.4 608.9 444.5 609.2 C445.5 609.5 446.2 610.2 447.2 610.5 C448.2 610.8 449.5 610.6 450.5 610.9 C451.5 611.2 453.0 611.6 453.4 612.4 Z" fill="#5cac3c"/><path d="M459.0 648.0 C459.0 649.6 457.3 651.6 456.2 652.9 C455.0 654.3 453.1 654.9 452.1 656.3 C451.1 657.6 451.0 659.5 450.0 660.9 C449.0 662.4 447.5 664.5 445.9 665.0 C444.2 665.6 441.8 664.6 440.0 664.0 C438.2 663.4 437.0 661.9 435.4 661.4 C433.7 660.9 431.8 661.4 430.0 660.9 C428.2 660.5 425.6 659.9 424.6 658.5 C423.6 657.2 423.8 654.7 423.8 652.9 C423.9 651.2 425.0 649.6 425.0 648.0 C425.0 646.4 423.9 644.8 423.8 643.1 C423.8 641.3 423.6 638.8 424.6 637.5 C425.6 636.1 428.2 635.5 430.0 635.1 C431.8 634.6 433.7 635.1 435.4 634.6 C437.0 634.1 438.2 632.6 440.0 632.0 C441.8 631.4 444.2 630.4 445.9 631.0 C447.5 631.5 449.0 633.6 450.0 635.1 C451.0 636.5 451.1 638.4 452.1 639.7 C453.1 641.1 455.0 641.7 456.2 643.1 C457.3 644.4 459.0 646.4 459.0 648.0 Z" fill="#bfe4a1"/><path d="M428.8 640.0 C428.8 641.3 428.0 642.8 427.4 643.8 C426.8 644.9 425.8 645.5 425.1 646.4 C424.4 647.3 423.9 648.5 423.1 649.2 C422.2 650.0 421.0 651.0 420.0 651.0 C419.0 651.0 417.8 650.0 416.9 649.2 C416.1 648.5 415.6 647.3 414.9 646.4 C414.2 645.5 413.2 644.9 412.6 643.8 C412.0 642.8 411.2 641.3 411.2 640.0 C411.2 638.7 412.0 637.2 412.6 636.2 C413.2 635.1 414.2 634.5 414.9 633.6 C415.6 632.7 416.1 631.5 416.9 630.8 C417.8 630.0 419.0 629.0 420.0 629.0 C421.0 629.0 422.2 630.0 423.1 630.8 C423.9 631.5 424.4 632.7 425.1 633.6 C425.8 634.5 426.8 635.1 427.4 636.2 C428.0 637.2 428.8 638.7 428.8 640.0 Z" fill="#5cac3c"/><path d="M497.4 664.9 C496.8 666.6 495.0 668.2 493.7 669.5 C492.4 670.7 490.9 671.0 489.6 672.2 C488.4 673.3 487.5 675.1 486.2 676.3 C484.9 677.5 483.1 679.1 481.7 679.2 C480.3 679.3 478.9 677.9 477.8 676.9 C476.8 675.9 476.3 674.2 475.3 673.2 C474.3 672.3 472.9 672.1 471.8 671.1 C470.8 670.0 469.4 668.7 469.1 667.0 C468.9 665.3 469.8 662.8 470.5 661.0 C471.1 659.2 472.4 657.7 473.0 656.0 C473.6 654.3 473.6 652.4 474.3 650.5 C475.0 648.7 475.9 646.2 477.1 645.1 C478.4 644.0 480.3 643.8 481.8 643.7 C483.3 643.6 484.5 644.4 485.9 644.3 C487.3 644.2 488.7 643.2 490.2 643.1 C491.6 643.0 493.6 642.8 494.6 643.8 C495.6 644.8 495.9 647.2 496.2 648.9 C496.4 650.7 495.9 652.6 496.2 654.3 C496.4 656.0 497.3 657.2 497.5 659.0 C497.7 660.8 498.1 663.1 497.4 664.9 Z" fill="#bfe4a1"/><path d="M494.3 667.0 C493.7 668.4 492.4 669.9 491.4 670.8 C490.4 671.8 489.2 672.1 488.2 672.9 C487.1 673.7 486.2 674.9 485.1 675.5 C484.0 676.0 482.4 676.8 481.5 676.4 C480.5 676.1 479.8 674.5 479.3 673.4 C478.9 672.2 478.9 670.7 478.6 669.4 C478.3 668.2 477.6 667.2 477.5 665.8 C477.3 664.4 477.2 662.4 477.7 661.0 C478.3 659.6 479.6 658.1 480.6 657.2 C481.6 656.2 482.8 655.9 483.8 655.1 C484.9 654.3 485.8 653.1 486.9 652.5 C488.0 652.0 489.6 651.2 490.5 651.6 C491.5 651.9 492.2 653.5 492.7 654.6 C493.1 655.8 493.1 657.3 493.4 658.6 C493.7 659.8 494.4 660.8 494.5 662.2 C494.7 663.6 494.8 665.6 494.3 667.0 Z" fill="#5cac3c"/><path d="M573.8 664.0 C573.8 666.2 571.6 668.6 570.2 670.5 C568.8 672.3 566.5 673.1 565.5 675.0 C564.5 676.9 565.0 679.5 564.3 681.7 C563.5 683.9 562.6 687.2 560.9 688.2 C559.2 689.3 556.1 688.5 554.0 688.1 C551.8 687.8 550.0 686.0 548.0 686.0 C546.0 686.0 544.2 687.8 542.0 688.1 C539.9 688.5 536.8 689.3 535.1 688.2 C533.4 687.2 532.5 683.9 531.7 681.7 C531.0 679.5 531.5 676.9 530.5 675.0 C529.5 673.1 527.2 672.3 525.8 670.5 C524.4 668.6 522.2 666.2 522.2 664.0 C522.2 661.8 524.4 659.4 525.8 657.5 C527.2 655.7 529.5 654.9 530.5 653.0 C531.5 651.1 531.0 648.5 531.7 646.3 C532.5 644.1 533.4 640.8 535.1 639.8 C536.8 638.7 539.9 639.5 542.0 639.9 C544.2 640.2 546.0 642.0 548.0 642.0 C550.0 642.0 551.8 640.2 554.0 639.9 C556.1 639.5 559.2 638.7 560.9 639.8 C562.6 640.8 563.5 644.1 564.3 646.3 C565.0 648.5 564.5 651.1 565.5 653.0 C566.5 654.9 568.8 655.7 570.2 657.5 C571.6 659.4 573.8 661.8 573.8 664.0 Z" fill="#bfe4a1"/><path d="M541.0 690.1 C541.8 688.4 543.8 682.1 544.7 678.4 C545.6 674.7 546.7 669.2 547.1 665.7 C547.4 662.2 547.5 657.5 547.2 655.1 C546.9 652.8 545.8 650.1 545.0 650.0 C544.2 649.9 542.5 652.2 541.6 654.5 C540.7 656.7 539.6 661.2 539.1 664.7 C538.6 668.2 538.3 673.8 538.3 677.6 C538.3 681.4 538.6 688.0 539.0 689.9 C539.4 691.8 540.1 691.8 541.0 690.1 Z" fill="#5cac3c"/><path d="M540.8 690.6 C542.3 689.6 546.8 685.4 549.2 682.9 C551.6 680.4 555.0 676.4 556.9 673.8 C558.7 671.1 560.8 667.3 561.6 665.3 C562.4 663.2 562.7 660.5 562.0 660.0 C561.3 659.5 558.8 660.6 557.1 661.9 C555.4 663.3 552.4 666.5 550.4 669.0 C548.5 671.6 545.7 676.1 544.0 679.1 C542.3 682.2 539.7 687.7 539.2 689.4 C538.7 691.1 539.3 691.6 540.8 690.6 Z" fill="#5cac3c"/><path d="M541.0 689.7 C541.2 688.4 541.0 683.8 540.7 681.3 C540.3 678.7 539.6 674.9 538.9 672.7 C538.1 670.5 536.7 667.6 535.6 666.3 C534.6 665.0 532.8 663.8 532.0 664.0 C531.2 664.2 530.4 666.3 530.3 667.9 C530.2 669.6 530.6 672.8 531.2 675.1 C531.9 677.3 533.4 680.9 534.5 683.1 C535.7 685.4 538.1 689.3 539.0 690.3 C540.0 691.3 540.7 691.1 541.0 689.7 Z" fill="#5cac3c"/><path d="M556.3 628.0 C556.0 630.8 554.8 634.1 553.8 636.3 C552.8 638.4 551.5 639.9 550.3 641.2 C549.1 642.4 547.8 643.7 546.6 643.8 C545.4 644.0 544.0 643.5 543.2 641.9 C542.4 640.4 541.9 637.2 541.8 634.6 C541.7 631.9 542.1 628.9 542.5 626.1 C542.9 623.3 543.3 620.2 544.2 617.7 C545.0 615.2 546.3 612.3 547.5 611.0 C548.7 609.8 550.3 609.7 551.4 610.2 C552.5 610.6 553.4 612.2 554.2 613.8 C555.0 615.3 555.8 617.0 556.2 619.4 C556.5 621.8 556.7 625.2 556.3 628.0 Z" fill="#bfe4a1"/><path d="M538.0 680.0 C538.0 681.3 536.0 682.8 534.5 683.8 C532.9 684.9 530.5 685.5 528.7 686.4 C526.9 687.3 525.8 688.5 523.7 689.2 C521.5 690.0 518.6 691.0 516.0 691.0 C513.4 691.0 510.5 690.0 508.3 689.2 C506.2 688.5 505.1 687.3 503.3 686.4 C501.5 685.5 499.1 684.9 497.5 683.8 C496.0 682.8 494.0 681.3 494.0 680.0 C494.0 678.7 496.0 677.2 497.5 676.2 C499.1 675.1 501.5 674.5 503.3 673.6 C505.1 672.7 506.2 671.5 508.3 670.8 C510.5 670.0 513.4 669.0 516.0 669.0 C518.6 669.0 521.5 670.0 523.7 670.8 C525.8 671.5 526.9 672.7 528.7 673.6 C530.5 674.5 532.9 675.1 534.5 676.2 C536.0 677.2 538.0 678.7 538.0 680.0 Z" fill="#bfe4a1"/><path d="M484.5 677.3 C484.1 678.3 482.3 679.1 481.0 679.7 C479.6 680.2 477.9 680.1 476.4 680.4 C474.9 680.8 473.8 681.5 472.2 681.6 C470.6 681.8 468.3 681.9 466.6 681.3 C464.9 680.7 463.3 679.1 462.1 678.0 C461.0 676.8 460.6 675.5 459.7 674.3 C458.8 673.1 457.4 672.1 456.7 670.8 C456.0 669.5 455.1 667.8 455.5 666.7 C455.9 665.7 457.7 664.9 459.0 664.3 C460.4 663.8 462.1 663.9 463.6 663.6 C465.1 663.2 466.2 662.5 467.8 662.4 C469.4 662.2 471.7 662.1 473.4 662.7 C475.1 663.3 476.7 664.9 477.9 666.0 C479.0 667.2 479.4 668.5 480.3 669.7 C481.2 670.9 482.6 671.9 483.3 673.2 C484.0 674.5 484.9 676.2 484.5 677.3 Z" fill="#bfe4a1"/><path d="M609.8 680.0 C609.8 681.1 608.0 682.5 606.6 683.4 C605.2 684.4 603.1 684.9 601.5 685.7 C599.8 686.5 598.8 687.6 596.9 688.3 C595.0 689.0 592.3 689.9 590.0 689.9 C587.7 689.9 585.0 689.0 583.1 688.3 C581.2 687.6 580.2 686.5 578.5 685.7 C576.9 684.9 574.8 684.4 573.4 683.4 C572.0 682.5 570.2 681.1 570.2 680.0 C570.2 678.9 572.0 677.5 573.4 676.6 C574.8 675.6 576.9 675.1 578.5 674.3 C580.2 673.5 581.2 672.4 583.1 671.7 C585.0 671.0 587.7 670.1 590.0 670.1 C592.3 670.1 595.0 671.0 596.9 671.7 C598.8 672.4 599.8 673.5 601.5 674.3 C603.1 675.1 605.2 675.6 606.6 676.6 C608.0 677.5 609.8 678.9 609.8 680.0 Z" fill="#bfe4a1"/><path d="M508.8 672.0 C508.8 672.8 508.0 673.7 507.4 674.3 C506.8 674.9 505.8 675.3 505.1 675.8 C504.4 676.4 503.9 677.1 503.1 677.5 C502.2 678.0 501.0 678.6 500.0 678.6 C499.0 678.6 497.8 678.0 496.9 677.5 C496.1 677.1 495.6 676.4 494.9 675.8 C494.2 675.3 493.2 674.9 492.6 674.3 C492.0 673.7 491.2 672.8 491.2 672.0 C491.2 671.2 492.0 670.3 492.6 669.7 C493.2 669.1 494.2 668.7 494.9 668.2 C495.6 667.6 496.1 666.9 496.9 666.5 C497.8 666.0 499.0 665.4 500.0 665.4 C501.0 665.4 502.2 666.0 503.1 666.5 C503.9 666.9 504.4 667.6 505.1 668.2 C505.8 668.7 506.8 669.1 507.4 669.7 C508.0 670.3 508.8 671.2 508.8 672.0 Z" fill="#5cac3c"/><path d="M634.6 587.3 C634.2 588.9 630.9 589.9 628.9 590.8 C626.8 591.7 623.7 591.5 622.3 592.7 C621.0 593.8 621.6 596.1 620.6 597.7 C619.7 599.3 618.7 601.9 616.6 602.4 C614.5 602.9 610.9 601.5 608.3 600.7 C605.7 600.0 603.5 598.1 601.2 597.9 C598.8 597.6 596.8 599.0 594.3 599.3 C591.8 599.5 588.2 600.1 586.1 599.1 C583.9 598.2 582.6 595.4 581.5 593.6 C580.3 591.7 580.7 589.5 579.1 588.1 C577.6 586.6 574.5 586.1 572.3 584.8 C570.1 583.4 566.7 581.7 566.0 580.0 C565.4 578.3 567.5 576.2 568.6 574.7 C569.7 573.1 572.4 572.3 572.8 570.7 C573.2 569.1 571.3 567.1 571.1 565.2 C570.9 563.3 570.2 560.5 571.6 559.3 C573.0 558.2 576.8 558.4 579.4 558.3 C581.9 558.2 584.9 559.3 587.0 558.8 C589.0 558.3 589.8 556.3 591.7 555.3 C593.6 554.2 596.2 552.5 598.5 552.7 C600.8 553.0 603.6 555.3 605.7 556.7 C607.8 558.2 608.8 560.4 610.9 561.4 C613.1 562.3 615.9 561.8 618.5 562.4 C621.1 563.1 625.0 563.7 626.6 565.2 C628.1 566.6 627.7 569.3 627.7 571.2 C627.7 573.1 626.1 574.8 626.7 576.5 C627.3 578.1 630.1 579.5 631.4 581.3 C632.7 583.1 635.0 585.7 634.6 587.3 Z" fill="#bfe4a1"/><path d="M571.8 573.0 C574.0 574.1 582.1 577.2 586.9 578.7 C591.6 580.3 598.8 582.4 603.3 583.3 C607.9 584.3 614.0 585.2 617.1 585.3 C620.2 585.4 623.8 584.8 624.0 584.0 C624.2 583.2 621.2 581.1 618.4 579.8 C615.6 578.6 609.6 576.6 605.1 575.5 C600.6 574.4 593.3 573.2 588.3 572.5 C583.4 571.8 574.7 571.0 572.2 571.0 C569.7 571.1 569.6 571.8 571.8 573.0 Z" fill="#bfe4a1"/><path d="M572.4 572.9 C574.0 573.0 579.6 572.1 582.7 571.4 C585.9 570.7 590.5 569.4 593.2 568.3 C596.0 567.2 599.5 565.3 601.1 564.1 C602.8 562.8 604.3 560.8 604.0 560.0 C603.7 559.2 601.2 558.7 599.2 558.8 C597.1 558.9 593.2 559.8 590.4 560.8 C587.6 561.8 583.3 563.9 580.5 565.4 C577.7 566.9 572.9 569.9 571.6 571.1 C570.4 572.2 570.7 572.9 572.4 572.9 Z" fill="#bfe4a1"/><path d="M593.2 548.0 C593.2 549.8 592.0 551.9 591.1 553.4 C590.2 554.8 588.7 555.6 587.6 556.9 C586.6 558.2 585.9 559.9 584.6 560.9 C583.3 562.0 581.5 563.4 580.0 563.4 C578.5 563.4 576.7 562.0 575.4 560.9 C574.1 559.9 573.4 558.2 572.4 556.9 C571.3 555.6 569.8 554.8 568.9 553.4 C568.0 551.9 566.8 549.8 566.8 548.0 C566.8 546.2 568.0 544.1 568.9 542.6 C569.8 541.2 571.3 540.4 572.4 539.1 C573.4 537.8 574.1 536.1 575.4 535.1 C576.7 534.0 578.5 532.6 580.0 532.6 C581.5 532.6 583.3 534.0 584.6 535.1 C585.9 536.1 586.6 537.8 587.6 539.1 C588.7 540.4 590.2 541.2 591.1 542.6 C592.0 544.1 593.2 546.2 593.2 548.0 Z" fill="#bfe4a1"/><path d="M709.8 543.7 C708.2 545.6 703.8 546.6 702.2 548.4 C700.7 550.2 700.7 551.9 700.5 554.4 C700.3 556.9 701.9 561.1 700.8 563.2 C699.8 565.3 696.8 566.6 694.2 566.9 C691.7 567.2 687.7 564.9 685.3 565.2 C682.9 565.4 681.6 566.6 679.6 568.2 C677.6 569.7 675.6 573.8 673.2 574.5 C670.9 575.2 667.8 574.2 665.7 572.7 C663.6 571.1 662.5 566.9 660.6 565.4 C658.7 563.9 656.8 564.0 654.2 563.7 C651.6 563.4 647.1 564.9 644.9 563.8 C642.7 562.8 641.3 560.0 640.9 557.5 C640.5 555.0 642.8 551.4 642.5 549.1 C642.3 546.7 640.9 545.5 639.3 543.6 C637.6 541.6 633.3 539.6 632.4 537.4 C631.6 535.2 632.7 532.3 634.2 530.3 C635.8 528.4 640.2 527.4 641.8 525.6 C643.3 523.8 643.3 522.1 643.5 519.6 C643.7 517.1 642.1 512.9 643.2 510.8 C644.2 508.7 647.2 507.4 649.8 507.1 C652.3 506.8 656.3 509.1 658.7 508.8 C661.1 508.6 662.4 507.4 664.4 505.8 C666.4 504.3 668.4 500.2 670.8 499.5 C673.1 498.8 676.2 499.8 678.3 501.3 C680.4 502.9 681.5 507.1 683.4 508.6 C685.3 510.1 687.2 510.0 689.8 510.3 C692.4 510.6 696.9 509.1 699.1 510.2 C701.3 511.2 702.7 514.0 703.1 516.5 C703.5 519.0 701.2 522.6 701.5 524.9 C701.7 527.3 703.1 528.5 704.7 530.4 C706.4 532.4 710.7 534.4 711.6 536.6 C712.4 538.8 711.3 541.7 709.8 543.7 Z" fill="#bfe4a1"/><path d="M677.2 559.3 C676.8 556.8 673.9 548.3 672.1 543.5 C670.2 538.7 667.1 531.8 664.7 527.6 C662.4 523.5 658.7 518.3 656.5 515.9 C654.3 513.6 651.0 511.4 650.0 512.0 C649.0 512.6 649.0 516.5 649.7 519.6 C650.5 522.7 652.9 528.6 655.0 532.9 C657.2 537.1 661.4 543.5 664.3 547.7 C667.3 551.9 672.9 558.9 674.8 560.7 C676.7 562.4 677.6 561.9 677.2 559.3 Z" fill="#5cac3c"/><path d="M677.4 559.9 C678.1 557.5 678.9 548.9 679.2 544.1 C679.4 539.2 679.4 531.9 679.0 527.3 C678.6 522.8 677.4 516.8 676.3 513.9 C675.3 511.0 673.2 507.9 672.0 508.0 C670.8 508.1 669.2 511.5 668.6 514.5 C668.0 517.6 667.8 523.7 668.0 528.2 C668.3 532.7 669.4 539.9 670.4 544.7 C671.4 549.5 673.6 557.8 674.6 560.1 C675.7 562.4 676.7 562.3 677.4 559.9 Z" fill="#5cac3c"/><path d="M677.2 560.7 C679.0 559.4 684.2 553.7 687.0 550.3 C689.7 546.9 693.6 541.6 695.6 538.0 C697.6 534.5 699.8 529.5 700.4 526.8 C701.1 524.1 701.0 520.6 700.0 520.0 C699.0 519.4 695.9 521.0 693.8 522.8 C691.7 524.7 688.3 528.9 686.2 532.4 C684.0 535.8 681.1 541.7 679.4 545.7 C677.7 549.8 675.2 557.0 674.8 559.3 C674.5 561.5 675.4 562.1 677.2 560.7 Z" fill="#5cac3c"/><path d="M676.5 558.7 C675.6 557.4 671.7 554.0 669.3 552.4 C667.0 550.7 663.3 548.5 660.8 547.5 C658.3 546.5 654.8 545.8 652.9 545.9 C651.0 546.0 648.5 546.9 648.0 548.0 C647.5 549.1 648.6 551.5 649.8 553.0 C651.1 554.4 654.1 556.5 656.5 557.6 C658.9 558.7 663.0 559.9 665.9 560.4 C668.7 561.0 673.9 561.5 675.5 561.3 C677.1 561.0 677.5 560.1 676.5 558.7 Z" fill="#5cac3c"/><path d="M675.7 561.3 C676.8 562.5 681.0 564.9 683.5 566.1 C686.0 567.3 689.8 568.7 692.2 569.1 C694.7 569.5 698.1 569.5 699.8 569.0 C701.6 568.6 703.8 567.1 704.0 566.0 C704.2 564.9 702.9 562.7 701.4 561.5 C700.0 560.4 696.9 558.9 694.5 558.3 C692.1 557.7 688.1 557.5 685.3 557.5 C682.6 557.5 677.7 558.1 676.3 558.7 C674.8 559.2 674.6 560.2 675.7 561.3 Z" fill="#5cac3c"/><path d="M773.0 548.3 C772.3 551.3 770.0 554.7 768.4 557.0 C766.8 559.2 765.1 560.0 763.5 561.9 C761.9 563.8 760.6 566.8 758.9 568.5 C757.2 570.2 754.7 572.5 753.2 572.2 C751.7 571.8 750.7 568.6 750.0 566.3 C749.3 564.0 749.5 560.7 749.0 558.3 C748.5 555.8 747.3 554.4 746.9 551.6 C746.6 548.8 746.2 544.8 747.0 541.7 C747.7 538.7 750.0 535.3 751.6 533.0 C753.2 530.8 754.9 530.0 756.5 528.1 C758.1 526.2 759.4 523.2 761.1 521.5 C762.8 519.8 765.3 517.5 766.8 517.8 C768.3 518.2 769.3 521.4 770.0 523.7 C770.7 526.0 770.5 529.3 771.0 531.7 C771.5 534.2 772.7 535.6 773.1 538.4 C773.4 541.2 773.8 545.2 773.0 548.3 Z" fill="#bfe4a1"/><path d="M764.9 567.8 C765.1 566.0 764.9 559.3 764.7 555.5 C764.4 551.7 763.8 546.1 763.1 542.6 C762.4 539.1 761.2 534.6 760.3 532.4 C759.3 530.2 757.7 527.9 757.0 528.0 C756.3 528.1 755.5 530.9 755.4 533.2 C755.3 535.6 755.7 540.3 756.2 543.8 C756.8 547.3 758.1 552.8 759.1 556.5 C760.2 560.1 762.3 566.4 763.1 568.2 C764.0 569.9 764.6 569.7 764.9 567.8 Z" fill="#5cac3c"/><path d="M727.6 624.0 C727.6 625.3 726.2 626.9 725.2 628.0 C724.2 629.2 722.6 629.8 721.6 630.9 C720.7 632.0 720.4 633.4 719.4 634.5 C718.4 635.6 717.0 637.2 715.4 637.6 C713.9 638.0 711.6 637.4 710.0 637.0 C708.4 636.6 707.1 635.5 705.6 635.1 C704.0 634.7 702.2 635.0 700.6 634.5 C699.0 634.1 696.7 633.5 695.8 632.4 C694.8 631.3 694.8 629.4 694.8 628.0 C694.8 626.6 695.6 625.3 695.6 624.0 C695.6 622.7 694.8 621.4 694.8 620.0 C694.8 618.6 694.8 616.7 695.8 615.6 C696.7 614.5 699.0 613.9 700.6 613.5 C702.2 613.0 704.0 613.3 705.6 612.9 C707.1 612.5 708.4 611.4 710.0 611.0 C711.6 610.6 713.9 610.0 715.4 610.4 C717.0 610.8 718.4 612.4 719.4 613.5 C720.4 614.6 720.7 616.0 721.6 617.1 C722.6 618.2 724.2 618.8 725.2 620.0 C726.2 621.1 727.6 622.7 727.6 624.0 Z" fill="#5cac3c"/><path d="M711.0 632.0 C711.0 633.1 710.0 634.5 709.2 635.4 C708.5 636.4 707.3 636.9 706.4 637.7 C705.5 638.5 704.9 639.6 703.8 640.3 C702.8 641.0 701.3 641.9 700.0 641.9 C698.7 641.9 697.2 641.0 696.2 640.3 C695.1 639.6 694.5 638.5 693.6 637.7 C692.7 636.9 691.5 636.4 690.8 635.4 C690.0 634.5 689.0 633.1 689.0 632.0 C689.0 630.9 690.0 629.5 690.8 628.6 C691.5 627.6 692.7 627.1 693.6 626.3 C694.5 625.5 695.1 624.4 696.2 623.7 C697.2 623.0 698.7 622.1 700.0 622.1 C701.3 622.1 702.8 623.0 703.8 623.7 C704.9 624.4 705.5 625.5 706.4 626.3 C707.3 627.1 708.5 627.6 709.2 628.6 C710.0 629.5 711.0 630.9 711.0 632.0 Z" fill="#bfe4a1"/><path d="M668.3 655.0 C668.3 657.4 666.4 660.1 665.1 662.1 C663.8 664.1 661.7 665.0 660.5 666.9 C659.4 668.8 659.3 671.5 658.2 673.6 C657.0 675.7 655.4 678.8 653.6 679.5 C651.7 680.2 649.0 678.9 647.0 678.0 C645.0 677.1 643.7 675.0 641.8 674.2 C640.0 673.5 637.8 674.3 635.8 673.6 C633.8 672.9 630.9 672.1 629.8 670.1 C628.6 668.2 628.8 664.6 628.9 662.1 C629.0 659.6 630.3 657.4 630.3 655.0 C630.3 652.6 629.0 650.4 628.9 647.9 C628.8 645.4 628.6 641.8 629.8 639.9 C630.9 637.9 633.8 637.1 635.8 636.4 C637.8 635.7 640.0 636.5 641.8 635.8 C643.7 635.0 645.0 632.9 647.0 632.0 C649.0 631.1 651.7 629.8 653.6 630.5 C655.4 631.2 657.0 634.3 658.2 636.4 C659.3 638.5 659.4 641.2 660.5 643.1 C661.7 645.0 663.8 645.9 665.1 647.9 C666.4 649.9 668.3 652.6 668.3 655.0 Z" fill="#bfe4a1"/><path d="M650.9 675.8 C651.0 674.1 650.7 668.0 650.3 664.6 C650.0 661.2 649.2 656.0 648.5 652.9 C647.7 649.8 646.3 645.7 645.4 643.8 C644.4 641.9 642.7 639.8 642.0 640.0 C641.3 640.2 640.6 642.7 640.6 644.9 C640.5 647.0 641.0 651.3 641.6 654.4 C642.3 657.6 643.7 662.5 644.9 665.8 C646.0 669.1 648.2 674.7 649.1 676.2 C650.0 677.7 650.7 677.5 650.9 675.8 Z" fill="#5cac3c"/><path d="M650.9 676.2 C651.7 675.2 653.6 671.2 654.5 668.8 C655.5 666.5 656.7 662.9 657.1 660.7 C657.6 658.4 657.8 655.3 657.7 653.7 C657.5 652.1 656.7 650.2 656.0 650.0 C655.3 649.8 653.7 651.2 652.9 652.6 C652.0 653.9 650.9 656.8 650.3 659.1 C649.7 661.3 649.2 665.1 649.1 667.6 C648.9 670.1 648.9 674.5 649.1 675.8 C649.4 677.1 650.0 677.2 650.9 676.2 Z" fill="#5cac3c"/><path d="M586.3 674.0 C586.3 676.0 585.0 678.4 584.0 680.1 C583.0 681.8 581.4 682.7 580.3 684.2 C579.1 685.6 578.4 687.5 577.0 688.8 C575.6 690.0 573.7 691.6 572.0 691.6 C570.3 691.6 568.4 690.0 567.0 688.8 C565.6 687.5 564.9 685.6 563.7 684.2 C562.6 682.7 561.0 681.8 560.0 680.1 C559.0 678.4 557.7 676.0 557.7 674.0 C557.7 672.0 559.0 669.6 560.0 667.9 C561.0 666.2 562.6 665.3 563.7 663.8 C564.9 662.4 565.6 660.5 567.0 659.2 C568.4 658.0 570.3 656.4 572.0 656.4 C573.7 656.4 575.6 658.0 577.0 659.2 C578.4 660.5 579.1 662.4 580.3 663.8 C581.4 665.3 583.0 666.2 584.0 667.9 C585.0 669.6 586.3 672.0 586.3 674.0 Z" fill="#bfe4a1"/><path d="M627.6 686.0 C627.6 686.8 626.0 687.7 624.8 688.3 C623.5 688.9 621.6 689.3 620.2 689.8 C618.7 690.4 617.8 691.1 616.1 691.5 C614.4 692.0 612.0 692.6 610.0 692.6 C608.0 692.6 605.6 692.0 603.9 691.5 C602.2 691.1 601.3 690.4 599.8 689.8 C598.4 689.3 596.5 688.9 595.2 688.3 C594.0 687.7 592.4 686.8 592.4 686.0 C592.4 685.2 594.0 684.3 595.2 683.7 C596.5 683.1 598.4 682.7 599.8 682.2 C601.3 681.6 602.2 680.9 603.9 680.5 C605.6 680.0 608.0 679.4 610.0 679.4 C612.0 679.4 614.4 680.0 616.1 680.5 C617.8 680.9 618.7 681.6 620.2 682.2 C621.6 682.7 623.5 683.1 624.8 683.7 C626.0 684.3 627.6 685.2 627.6 686.0 Z" fill="#bfe4a1"/><path d="M798.8 560.0 C798.8 561.8 798.0 563.9 797.4 565.4 C796.8 566.8 795.8 567.6 795.1 568.9 C794.4 570.2 793.9 571.9 793.1 572.9 C792.2 574.0 791.0 575.4 790.0 575.4 C789.0 575.4 787.8 574.0 786.9 572.9 C786.1 571.9 785.6 570.2 784.9 568.9 C784.2 567.6 783.2 566.8 782.6 565.4 C782.0 563.9 781.2 561.8 781.2 560.0 C781.2 558.2 782.0 556.1 782.6 554.6 C783.2 553.2 784.2 552.4 784.9 551.1 C785.6 549.8 786.1 548.1 786.9 547.1 C787.8 546.0 789.0 544.6 790.0 544.6 C791.0 544.6 792.2 546.0 793.1 547.1 C793.9 548.1 794.4 549.8 795.1 551.1 C795.8 552.4 796.8 553.2 797.4 554.6 C798.0 556.1 798.8 558.2 798.8 560.0 Z" fill="#bfe4a1"/><path d="M425.4 643.3 Q434.0 624.3 434.6 606.6" fill="none" stroke="#c6ced4" stroke-width="4" stroke-linecap="round"/><path d="M420.6 634.6 Q428.2 616.5 428.2 599.8" fill="none" stroke="#c6ced4" stroke-width="4" stroke-linecap="round"/><path d="M415.8 626.0 Q422.4 608.7 422.0 593.0" fill="none" stroke="#c6ced4" stroke-width="4" stroke-linecap="round"/><path d="M411.0 617.3 Q416.7 601.0 415.9 586.3" fill="none" stroke="#c6ced4" stroke-width="4" stroke-linecap="round"/><path d="M406.2 608.6 Q411.1 593.3 409.9 579.6" fill="none" stroke="#c6ced4" stroke-width="4" stroke-linecap="round"/><path d="M401.4 600.0 Q405.5 585.6 404.0 573.0" fill="none" stroke="#c6ced4" stroke-width="4" stroke-linecap="round"/><path d="M396.6 591.3 Q400.0 578.0 398.3 566.4" fill="none" stroke="#c6ced4" stroke-width="4" stroke-linecap="round"/><path d="M391.8 582.7 Q394.5 570.4 392.7 559.9" fill="none" stroke="#c6ced4" stroke-width="4" stroke-linecap="round"/><path d="M387.0 574.0 Q389.1 562.8 387.2 553.3" fill="none" stroke="#c6ced4" stroke-width="4" stroke-linecap="round"/><path d="M425.4 643.3 Q404.8 640.5 389.4 631.6" fill="none" stroke="#c6ced4" stroke-width="4" stroke-linecap="round"/><path d="M420.6 634.6 Q401.2 631.4 387.0 622.6" fill="none" stroke="#c6ced4" stroke-width="4" stroke-linecap="round"/><path d="M415.8 626.0 Q397.7 622.4 384.5 613.8" fill="none" stroke="#c6ced4" stroke-width="4" stroke-linecap="round"/><path d="M411.0 617.3 Q394.1 613.5 382.1 605.0" fill="none" stroke="#c6ced4" stroke-width="4" stroke-linecap="round"/><path d="M406.2 608.6 Q390.6 604.6 379.6 596.4" fill="none" stroke="#c6ced4" stroke-width="4" stroke-linecap="round"/><path d="M401.4 600.0 Q387.1 595.9 377.1 587.9" fill="none" stroke="#c6ced4" stroke-width="4" stroke-linecap="round"/><path d="M396.6 591.3 Q383.5 587.1 374.6 579.6" fill="none" stroke="#c6ced4" stroke-width="4" stroke-linecap="round"/><path d="M391.8 582.7 Q380.0 578.5 372.0 571.3" fill="none" stroke="#c6ced4" stroke-width="4" stroke-linecap="round"/><path d="M387.0 574.0 Q376.4 569.9 369.4 563.2" fill="none" stroke="#c6ced4" stroke-width="4" stroke-linecap="round"/><path d="M393.1 585.0 L377.8 557.5" stroke="#c6ced4" stroke-width="4" stroke-linecap="round"/><path d="M441.1 640.7 L415.6 603.4 L386.1 568.3 L382.6 570.3 L396.7 613.9 L414.9 655.3 Z" fill="#c6ced4" stroke="#c6ced4" stroke-width="1.4" stroke-linejoin="round"/><circle cx="465.5" cy="640" r="12.6" fill="#8a939a"/><circle cx="465.5" cy="640" r="12" fill="#c6ced4"/><path d="M468 650 L474 676" stroke="#c6ced4" stroke-width="4" fill="none"/><circle cx="498" cy="650" r="14.6" fill="#8a939a"/><circle cx="514" cy="640" r="13.6" fill="#8a939a"/><circle cx="520" cy="656" r="12.6" fill="#8a939a"/><circle cx="505" cy="662" r="10.6" fill="#8a939a"/><circle cx="498" cy="650" r="14" fill="#c6ced4"/><circle cx="514" cy="640" r="13" fill="#c6ced4"/><circle cx="520" cy="656" r="12" fill="#c6ced4"/><circle cx="505" cy="662" r="10" fill="#c6ced4"/><path d="M498 662 Q486 672 474 678" stroke="#c6ced4" stroke-width="4" fill="none"/><circle cx="722" cy="514" r="13.6" fill="#8a939a"/><circle cx="740" cy="510" r="14.6" fill="#8a939a"/><circle cx="752" cy="522" r="10.6" fill="#8a939a"/><circle cx="735" cy="528" r="9.6" fill="#8a939a"/><circle cx="722" cy="514" r="13" fill="#c6ced4"/><circle cx="740" cy="510" r="14" fill="#c6ced4"/><circle cx="752" cy="522" r="10" fill="#c6ced4"/><circle cx="735" cy="528" r="9" fill="#c6ced4"/><circle cx="778" cy="520" r="12.6" fill="#8a939a"/><circle cx="784" cy="538" r="9.6" fill="#8a939a"/><circle cx="774" cy="504" r="9.6" fill="#8a939a"/><circle cx="778" cy="520" r="12" fill="#c6ced4"/><circle cx="784" cy="538" r="9" fill="#c6ced4"/><circle cx="774" cy="504" r="9" fill="#c6ced4"/><path d="M708.8 652.4 Q701.5 631.9 689.1 618.2" fill="none" stroke="#c6ced4" stroke-width="4" stroke-linecap="round"/><path d="M698.0 649.1 Q690.6 630.3 678.6 617.8" fill="none" stroke="#c6ced4" stroke-width="4" stroke-linecap="round"/><path d="M687.2 645.8 Q679.7 628.6 668.2 617.4" fill="none" stroke="#c6ced4" stroke-width="4" stroke-linecap="round"/><path d="M676.4 642.5 Q668.9 626.9 658.0 616.9" fill="none" stroke="#c6ced4" stroke-width="4" stroke-linecap="round"/><path d="M665.6 639.2 Q658.3 625.1 648.0 616.4" fill="none" stroke="#c6ced4" stroke-width="4" stroke-linecap="round"/><path d="M654.7 635.9 Q647.7 623.3 638.1 615.7" fill="none" stroke="#c6ced4" stroke-width="4" stroke-linecap="round"/><path d="M643.9 632.6 Q637.2 621.5 628.4 615.0" fill="none" stroke="#c6ced4" stroke-width="4" stroke-linecap="round"/><path d="M633.1 629.3 Q626.8 619.7 618.8 614.2" fill="none" stroke="#c6ced4" stroke-width="4" stroke-linecap="round"/><path d="M708.8 652.4 Q691.3 665.3 673.3 669.8" fill="none" stroke="#c6ced4" stroke-width="4" stroke-linecap="round"/><path d="M698.0 649.1 Q681.3 660.6 664.4 664.2" fill="none" stroke="#c6ced4" stroke-width="4" stroke-linecap="round"/><path d="M687.2 645.8 Q671.4 655.9 655.6 658.7" fill="none" stroke="#c6ced4" stroke-width="4" stroke-linecap="round"/><path d="M676.4 642.5 Q661.5 651.3 646.8 653.4" fill="none" stroke="#c6ced4" stroke-width="4" stroke-linecap="round"/><path d="M665.6 639.2 Q651.6 646.8 638.2 648.3" fill="none" stroke="#c6ced4" stroke-width="4" stroke-linecap="round"/><path d="M654.7 635.9 Q641.9 642.3 629.7 643.3" fill="none" stroke="#c6ced4" stroke-width="4" stroke-linecap="round"/><path d="M643.9 632.6 Q632.2 638.0 621.2 638.4" fill="none" stroke="#c6ced4" stroke-width="4" stroke-linecap="round"/><path d="M633.1 629.3 Q622.6 633.7 612.8 633.8" fill="none" stroke="#c6ced4" stroke-width="4" stroke-linecap="round"/><path d="M645.1 632.9 L615.0 623.7" stroke="#c6ced4" stroke-width="4" stroke-linecap="round"/><path d="M719.3 636.8 L674.8 628.4 L628.5 625.8 L627.3 629.6 L667.2 653.2 L708.7 671.2 Z" fill="#c6ced4" stroke="#c6ced4" stroke-width="1.4" stroke-linejoin="round"/><circle cx="355.0" cy="513.9" r="17" fill="#ea5519"/><circle cx="376.0" cy="526.0" r="17" fill="#ea5519"/><circle cx="355.0" cy="538.1" r="17" fill="#ea5519"/><circle cx="362" cy="526" r="11.9" fill="#ea5519"/><circle cx="473.0" cy="522.5" r="17.3" fill="#ea5519"/><circle cx="486.4" cy="545.8" r="17.3" fill="#ea5519"/><circle cx="459.6" cy="545.8" r="17.3" fill="#ea5519"/><circle cx="473" cy="538" r="12.1" fill="#ea5519"/><circle cx="570.0" cy="575.0" r="17.3" fill="#ea5519"/><circle cx="577.0" cy="601.0" r="17.3" fill="#ea5519"/><circle cx="551.0" cy="594.0" r="17.3" fill="#ea5519"/><circle cx="566" cy="590" r="12.1" fill="#ea5519"/><circle cx="734.7" cy="576.7" r="17.3" fill="#ea5519"/><circle cx="743.9" cy="602.0" r="17.3" fill="#ea5519"/><circle cx="717.4" cy="597.3" r="17.3" fill="#ea5519"/><circle cx="732" cy="592" r="12.1" fill="#ea5519"/></g></g>
<path d="M333.8 409.5 A234 234 0 0 1 792.2 409.5 Z" fill="none" stroke="#7d8a80" stroke-width=".8"/>
<path d="M333.6 502 A234 234 0 0 0 792.4 502 Z" fill="none" stroke="#7d8a80" stroke-width=".8"/>
<text y="489" font-family="Liberation Serif, serif" font-weight="bold" font-size="104.8" fill="#8a939a" stroke="#8a939a" stroke-width="3.2" stroke-linejoin="round"><tspan x="401.40" textLength="62.24" lengthAdjust="spacingAndGlyphs">S</tspan><tspan x="460.70" textLength="65.30" lengthAdjust="spacingAndGlyphs">A</tspan><tspan x="529.89" textLength="58.47" lengthAdjust="spacingAndGlyphs">R</tspan><tspan x="591.30" textLength="66.30" lengthAdjust="spacingAndGlyphs">A</tspan><tspan x="660.54" textLength="59.46" lengthAdjust="spacingAndGlyphs">H</tspan></text>
<text y="489" font-family="Liberation Serif, serif" font-weight="bold" font-size="104.8" fill="#c6ced4" stroke="#c6ced4" stroke-width="1.4" stroke-linejoin="round"><tspan x="401.40" textLength="62.24" lengthAdjust="spacingAndGlyphs">S</tspan><tspan x="460.70" textLength="65.30" lengthAdjust="spacingAndGlyphs">A</tspan><tspan x="529.89" textLength="58.47" lengthAdjust="spacingAndGlyphs">R</tspan><tspan x="591.30" textLength="66.30" lengthAdjust="spacingAndGlyphs">A</tspan><tspan x="660.54" textLength="59.46" lengthAdjust="spacingAndGlyphs">H</tspan></text>
<path d="M563 437 V475 M545 456 H581" stroke="#b9c0c4" stroke-width=".6"/>
<rect x="288.3" y="180.6" width="550" height="550" fill="none" stroke="#999994" stroke-width="1.3"/>
<rect x="284" y="176" width="8" height="8" fill="#fff" stroke="#7a7a7a" stroke-width="1"/>
<rect x="834" y="176" width="8" height="8" fill="#fff" stroke="#7a7a7a" stroke-width="1"/>
<rect x="284" y="726" width="8" height="8" fill="#fff" stroke="#7a7a7a" stroke-width="1"/>
<rect x="834" y="726" width="8" height="8" fill="#fff" stroke="#7a7a7a" stroke-width="1"/>
<rect x="522" y="151.5" width="82" height="16.2" rx="2" fill="#1a1a1a"/>
<text x="563" y="163" text-anchor="middle" font-family="Liberation Sans, sans-serif" font-weight="bold" font-size="9.2" fill="#fff" xml:space="preserve">6.5  in x 6.5  in</text>
<path d="M1028 175.6 H1222.4 V158 L1271.6 182.7 L1222.4 207.6 V190 H1028 Z" fill="#000"/>
<path d="M710 457.8 V477.6 L714.6 473.4 L718.2 481 L721.6 479.4 L718.2 472.8 L724.9 472.7 Z" fill="#0a0a0a" stroke="#fff" stroke-width=".9" stroke-linejoin="round"/>
</svg>
<div class="abs" id="panel"></div>
<div class="t" id="tLayers" style="left:1279.5px;top:95px;font-size:10.4px;font-weight:bold;color:#0b8560;letter-spacing:.1px">Layers</div>
<div class="t" id="tCS" style="left:1338px;top:95px;font-size:11px;color:#666;letter-spacing:.15px">Color Sync</div>
<div class="abs" style="left:1266px;top:118px;width:234px;height:1px;background:#e6e6e6"></div>
<div class="abs" style="left:1267px;top:115.5px;width:58.5px;height:3px;border-radius:2px;background:#0b8560"></div>
<svg style="left:1281px;top:130px" width="16" height="16" viewBox="0 0 16 16"><path d="M1 4.6 V2.4 Q1 1 2.4 1 H4.6 M11.4 1 H13.6 Q15 1 15 2.4 V4.6 M15 11.4 V13.6 Q15 15 13.6 15 H11.4 M4.6 15 H2.4 Q1 15 1 13.6 V11.4" fill="none" stroke="#e4e4e4" stroke-width="1.2"/><circle cx="7" cy="7" r="3" fill="none" stroke="#e4e4e4" stroke-width="1.2"/><path d="M8.4 8.4 L12 12 H8.6" fill="none" stroke="#e4e4e4" stroke-width="1.2"/></svg>
<svg style="left:1312px;top:130px" width="16" height="16" viewBox="0 0 16 16"><path d="M11.2 4.4 V2.4 Q11.2 1 9.8 1 H2.4 Q1 1 1 2.4 V9.8 Q1 11.2 2.4 11.2 H4.4" fill="none" stroke="#222" stroke-width="1.3"/><rect x="4.6" y="4.6" width="10.2" height="10.2" rx="1.4" fill="#fff" stroke="#222" stroke-width="1.3"/><path d="M9.7 7 V12.4 M7 9.7 H12.4" stroke="#222" stroke-width="1.2"/></svg>
<svg style="left:1343.5px;top:129.5px" width="16" height="17" viewBox="0 0 16 17"><path d="M1 4.4 H15 M5.4 4.2 V2.6 Q5.4 1.2 6.8 1.2 H9.2 Q10.6 1.2 10.6 2.6 V4.2 M2.8 4.6 L3.6 14 Q3.8 15.6 5.4 15.6 H10.6 Q12.2 15.6 12.4 14 L13.2 4.6" fill="none" stroke="#222" stroke-width="1.3" stroke-linejoin="round"/><path d="M6.4 7.4 V12.4 M9.6 7.4 V12.4" stroke="#222" stroke-width="1.3"/></svg>
<div class="abs" style="left:1266px;top:156px;width:222px;height:1px;background:#ececec"></div>
<div class="abs" style="left:1270px;top:160px;width:214.5px;height:43.5px;border-radius:3px;background:#b6eedb"></div>
<svg style="left:1279.5px;top:175.5px" width="6" height="9" viewBox="0 0 6 9"><path d="M1 1 L4.8 4.5 L1 8" fill="none" stroke="#222" stroke-width="1.2"/></svg>
<svg style="left:1295px;top:171.5px" width="18" height="18" viewBox="0 0 18 18"><path d="M0 0 H7.4 Q3 3 0 7.4 Z M18 0 H10.6 Q15 3 18 7.4 Z M0 18 H7.4 Q3 15 0 10.6 Z M18 18 H10.6 Q15 15 18 10.6 Z" fill="#111"/><rect x="1" y="6.6" width="16" height="4.8" fill="#f2f8f5"/><text x="9" y="10.6" font-family="Liberation Sans, sans-serif" font-weight="bold" font-size="4.2" text-anchor="middle" fill="#111">SARAH</text></svg>
<div class="t" style="left:1320px;top:168.5px;font-size:10.5px;font-weight:bold;color:#1d3a33;letter-spacing:.2px">Subtract</div>
<div class="t" style="left:1320px;top:184px;font-size:10.5px;color:#78a799;letter-spacing:.3px">Basic Cut</div>
<div class="ln" style="top:213.9px">svg-monogram-christm...</div>
<div class="lc" style="top:229.4px">Basic Cut</div>
<svg style="left:1295px;top:216.9px" width="18" height="18" viewBox="0 0 18 18"><rect x=".7" y=".7" width="16.6" height="16.6" fill="#d5d9dd" stroke="#9ea4a9" stroke-width="1.2"/><path d="M2.4 7 Q9 -2.4 15.6 7 Z M2.4 11 Q9 20.4 15.6 11 Z" fill="#fff" stroke="#a6acb1" stroke-width=".6"/><path d="M1.3 7.6 H16.7 M1.3 10.4 H16.7" stroke="#9ea4a9" stroke-width=".7"/></svg>
<div class="ln" style="top:259.3px">svg-monogram-christm...</div>
<div class="lc" style="top:274.8px">Basic Cut</div>
<svg style="left:1295px;top:262.3px" width="18" height="18" viewBox="0 0 18 18"><circle cx="10.4" cy="5.6" r="4.4" fill="#e9561b"/><circle cx="5.4" cy="11" r="4.6" fill="#e9561b"/><circle cx="12.6" cy="12" r="4.6" fill="#e9561b"/><circle cx="9.6" cy="9.6" r="3" fill="#e9561b"/></svg>
<div class="ln" style="top:304.7px">svg-monogram-christm...</div>
<div class="lc" style="top:320.2px">Basic Cut</div>
<svg style="left:1295px;top:307.7px" width="18" height="18" viewBox="0 0 18 18"><circle cx="10.4" cy="5.6" r="4.4" fill="#e9561b"/><circle cx="5.4" cy="11" r="4.6" fill="#e9561b"/><circle cx="12.6" cy="12" r="4.6" fill="#e9561b"/><circle cx="9.6" cy="9.6" r="3" fill="#e9561b"/></svg>
<div class="ln" style="top:350.1px">svg-monogram-christm...</div>
<div class="lc" style="top:365.6px">Basic Cut</div>
<svg style="left:1295px;top:353.1px" width="18" height="18" viewBox="0 0 18 18"><circle cx="10.4" cy="5.6" r="4.4" fill="#e9561b"/><circle cx="5.4" cy="11" r="4.6" fill="#e9561b"/><circle cx="12.6" cy="12" r="4.6" fill="#e9561b"/><circle cx="9.6" cy="9.6" r="3" fill="#e9561b"/></svg>
<div class="ln" style="top:395.5px">svg-monogram-christm...</div>
<div class="lc" style="top:411.0px">Basic Cut</div>
<svg style="left:1295px;top:398.5px" width="18" height="18" viewBox="0 0 18 18"><circle cx="10.4" cy="5.6" r="4.4" fill="#e9561b"/><circle cx="5.4" cy="11" r="4.6" fill="#e9561b"/><circle cx="12.6" cy="12" r="4.6" fill="#e9561b"/><circle cx="9.6" cy="9.6" r="3" fill="#e9561b"/></svg>
<div class="ln" style="top:440.9px">svg-monogram-christm...</div>
<div class="lc" style="top:456.4px">Basic Cut</div>
<svg style="left:1295px;top:443.9px" width="18" height="18" viewBox="0 0 18 18"><circle cx="10.4" cy="5.6" r="4.4" fill="#e9561b"/><circle cx="5.4" cy="11" r="4.6" fill="#e9561b"/><circle cx="12.6" cy="12" r="4.6" fill="#e9561b"/><circle cx="9.6" cy="9.6" r="3" fill="#e9561b"/></svg>
<div class="ln" style="top:486.3px">svg-monogram-christm...</div>
<div class="lc" style="top:501.8px">Basic Cut</div>
<svg style="left:1295px;top:489.3px" width="18" height="18" viewBox="0 0 18 18"><circle cx="10.4" cy="5.6" r="4.4" fill="#e9561b"/><circle cx="5.4" cy="11" r="4.6" fill="#e9561b"/><circle cx="12.6" cy="12" r="4.6" fill="#e9561b"/><circle cx="9.6" cy="9.6" r="3" fill="#e9561b"/></svg>
<div class="ln" style="top:531.7px">svg-monogram-christm...</div>
<div class="lc" style="top:547.2px">Basic Cut</div>
<svg style="left:1295px;top:534.7px" width="18" height="18" viewBox="0 0 18 18"><circle cx="10.4" cy="5.6" r="4.4" fill="#e9561b"/><circle cx="5.4" cy="11" r="4.6" fill="#e9561b"/><circle cx="12.6" cy="12" r="4.6" fill="#e9561b"/><circle cx="9.6" cy="9.6" r="3" fill="#e9561b"/></svg>
<div class="ln" style="top:577.1px">svg-monogram-christm...</div>
<div class="lc" style="top:592.6px">Basic Cut</div>
<svg style="left:1295px;top:580.1px" width="18" height="18" viewBox="0 0 18 18"><circle cx="10.4" cy="5.6" r="4.4" fill="#e9561b"/><circle cx="5.4" cy="11" r="4.6" fill="#e9561b"/><circle cx="12.6" cy="12" r="4.6" fill="#e9561b"/><circle cx="9.6" cy="9.6" r="3" fill="#e9561b"/></svg>
<div class="ln" style="top:622.5px">svg-monogram-christm...</div>
<div class="lc" style="top:638.0px">Basic Cut</div>
<svg style="left:1295px;top:625.5px" width="18" height="18" viewBox="0 0 18 18"><circle cx="10.4" cy="5.6" r="4.4" fill="#e9561b"/><circle cx="5.4" cy="11" r="4.6" fill="#e9561b"/><circle cx="12.6" cy="12" r="4.6" fill="#e9561b"/><circle cx="9.6" cy="9.6" r="3" fill="#e9561b"/></svg>
<div class="ln" style="top:667.9px">svg-monogram-christm...</div>
<div class="lc" style="top:683.4px">Basic Cut</div>
<svg style="left:1295px;top:670.9px" width="18" height="18" viewBox="0 0 18 18"><rect x=".6" y=".6" width="16.8" height="16.8" fill="#d8dde1" stroke="#b5bcc2" stroke-width="1"/><circle cx="9" cy="9" r="6" fill="#fff" stroke="#222" stroke-width="1.6" stroke-dasharray="2 1.6"/></svg>
<div class="ln" style="top:713.3px">svg-monogram-christm...</div>
<div class="lc" style="top:728.8px">Basic Cut</div>
<svg style="left:1295px;top:716.3px" width="18" height="18" viewBox="0 0 18 18"><rect width="18" height="18" fill="#17420f"/><g fill="#e8efe0"><ellipse cx="9" cy="5.4" rx="1.2" ry="2"/><ellipse cx="5.6" cy="7.4" rx="1.8" ry="1.1" transform="rotate(-30 5.6 7.4)"/><ellipse cx="12.4" cy="7.4" rx="1.8" ry="1.1" transform="rotate(30 12.4 7.4)"/><ellipse cx="6.6" cy="11.6" rx="1.1" ry="1.8" transform="rotate(30 6.6 11.6)"/><ellipse cx="11.4" cy="11.6" rx="1.1" ry="1.8" transform="rotate(-30 11.4 11.6)"/><circle cx="9" cy="9" r="1"/></g></svg>
<div class="abs" style="left:1266px;top:750px;width:222px;height:15.3px;overflow:hidden"><div class="ln" style="left:54px;top:8.7px">svg-monogram-christm...</div><div class="abs" style="left:29px;top:11.7px;width:18px;height:18px;background:#3f9a2c"></div></div>
<div class="abs" style="left:1488px;top:157px;width:12px;height:608px;background:#f1f1f1"></div>
<div class="abs" style="left:1489px;top:171px;width:11px;height:512px;background:#c1c1c1"></div>
<svg style="left:1490px;top:162px" width="8" height="5" viewBox="0 0 8 5"><path d="M.5 4.5 L4 .8 L7.5 4.5 Z" fill="#8a8a8a"/></svg>
<svg style="left:1490px;top:756px" width="8" height="5" viewBox="0 0 8 5"><path d="M.5 .5 L4 4.2 L7.5 .5 Z" fill="#333"/></svg>
<div class="abs" style="left:1268px;top:765.3px;width:232px;height:38.4px;background:#f4f4f4"></div>
<div class="abs" style="left:1274.3px;top:770px;width:41.5px;height:28.5px;background:#fff;border:1px solid #b9b9b9;border-radius:2px"></div>
<div class="t" style="left:1323.5px;top:781px;font-size:7.8px;color:#555;letter-spacing:.2px">Blank Canvas</div>
<svg style="left:1286px;top:807.5px" width="16" height="16" viewBox="0 0 16 16"><circle cx="6.6" cy="6.6" r="5.4" fill="none" stroke="#dcdcdc" stroke-width="1.2"/><rect x="6.4" y="6.4" width="8" height="8" rx="1" fill="none" stroke="#dcdcdc" stroke-width="1.2"/></svg>
<div class="bl" style="left:1268.7px;top:828.5px">Slice</div>
<svg style="left:1327px;top:807px" width="17" height="17" viewBox="0 0 17 17"><rect x="1" y="1" width="9" height="9" rx="1.4" fill="none" stroke="#222" stroke-width="1.4"/><circle cx="10.6" cy="10.6" r="4.8" fill="none" stroke="#222" stroke-width="1.4"/></svg>
<div class="car" style="left:1347px;top:814.5px"></div>
<div class="bl" style="left:1314.5px;top:828.5px;color:#444">Combine</div>
<svg style="left:1375.5px;top:810px" width="17" height="10" viewBox="0 0 17 10"><path d="M12.6 3.2 H5.6 Q3.6 3.2 3.6 5 Q3.6 6.8 5.6 6.8 H12.4 Q16 6.8 16 4.4 Q16 1 12.4 1 H5 Q1 1 1 5 Q1 9 5 9 H12.4" fill="none" stroke="#dcdcdc" stroke-width="1.2"/></svg>
<div class="bl" style="left:1358.8px;top:828.5px">Attach</div>
<svg style="left:1420px;top:807px" width="17" height="17" viewBox="0 0 17 17"><path d="M8.5 1 V6.6 M6 4.6 L8.5 7 L11 4.6" fill="none" stroke="#dcdcdc" stroke-width="1.2"/><path d="M1.6 7.6 L8.5 11 L15.4 7.6 M1.6 11.4 L8.5 14.8 L15.4 11.4" fill="none" stroke="#dcdcdc" stroke-width="1.2" stroke-linejoin="round"/></svg>
<div class="bl" style="left:1403.2px;top:828.5px">Flatten</div>
<svg style="left:1465px;top:807px" width="18" height="18" viewBox="0 0 18 18"><circle cx="9" cy="9" r="7.6" fill="none" stroke="#dcdcdc" stroke-width="1.3" stroke-dasharray="3 2.2"/></svg>
<div class="bl" style="left:1449px;top:828.5px">Contour</div>
<!-- zoom control -->
<div class="abs" style="left:100px;top:796px;width:69px;height:26.5px;border-radius:13px;background:#ececec"></div>
<div class="t" style="left:132.5px;top:802px;font-size:14px;color:#8c8c8c">%</div>
<svg style="left:150px;top:801px" width="16" height="16" viewBox="0 0 16 16"><circle cx="8" cy="8" r="6.8" fill="none" stroke="#bdbdbd" stroke-width="1.2"/><path d="M8 4.6 V11.4 M4.6 8 H11.4" stroke="#bdbdbd" stroke-width="1.2"/></svg>
<!-- Craft with Sarah logo -->
<svg style="left:0;top:715px" width="160" height="123" viewBox="0 715 160 123">
<ellipse cx="76.4" cy="775.7" rx="66.5" ry="52" fill="#c8351c"/>

<text x="104" y="766.6" font-family="Liberation Serif, serif" font-weight="bold" font-size="8.8" fill="#fff" textLength="26" lengthAdjust="spacingAndGlyphs">WITH</text>
<path d="M105 771.6 Q110 768.6 117 770 Q125 771.8 131.4 768.6" fill="none" stroke="#fff" stroke-width="1.3" stroke-linecap="round"/>
<path d="M70 790 Q82 781 96 783 Q110 786 116 780 Q121 774 115 772 Q110 772 111 777" fill="none" stroke="#fff" stroke-width="1" stroke-linecap="round"/>
<path d="M84 786 Q88 780 92 784 Q93 788 89 788" fill="none" stroke="#fff" stroke-width="1" stroke-linecap="round"/>
</svg>
<div class="lw" id="lwC" style="left:27px;top:737px;font-size:31px">Craft</div>
<div class="lw" id="lwS" style="left:35px;top:770px;font-size:30px;letter-spacing:.8px">Sarah</div>
</body>
</html>
